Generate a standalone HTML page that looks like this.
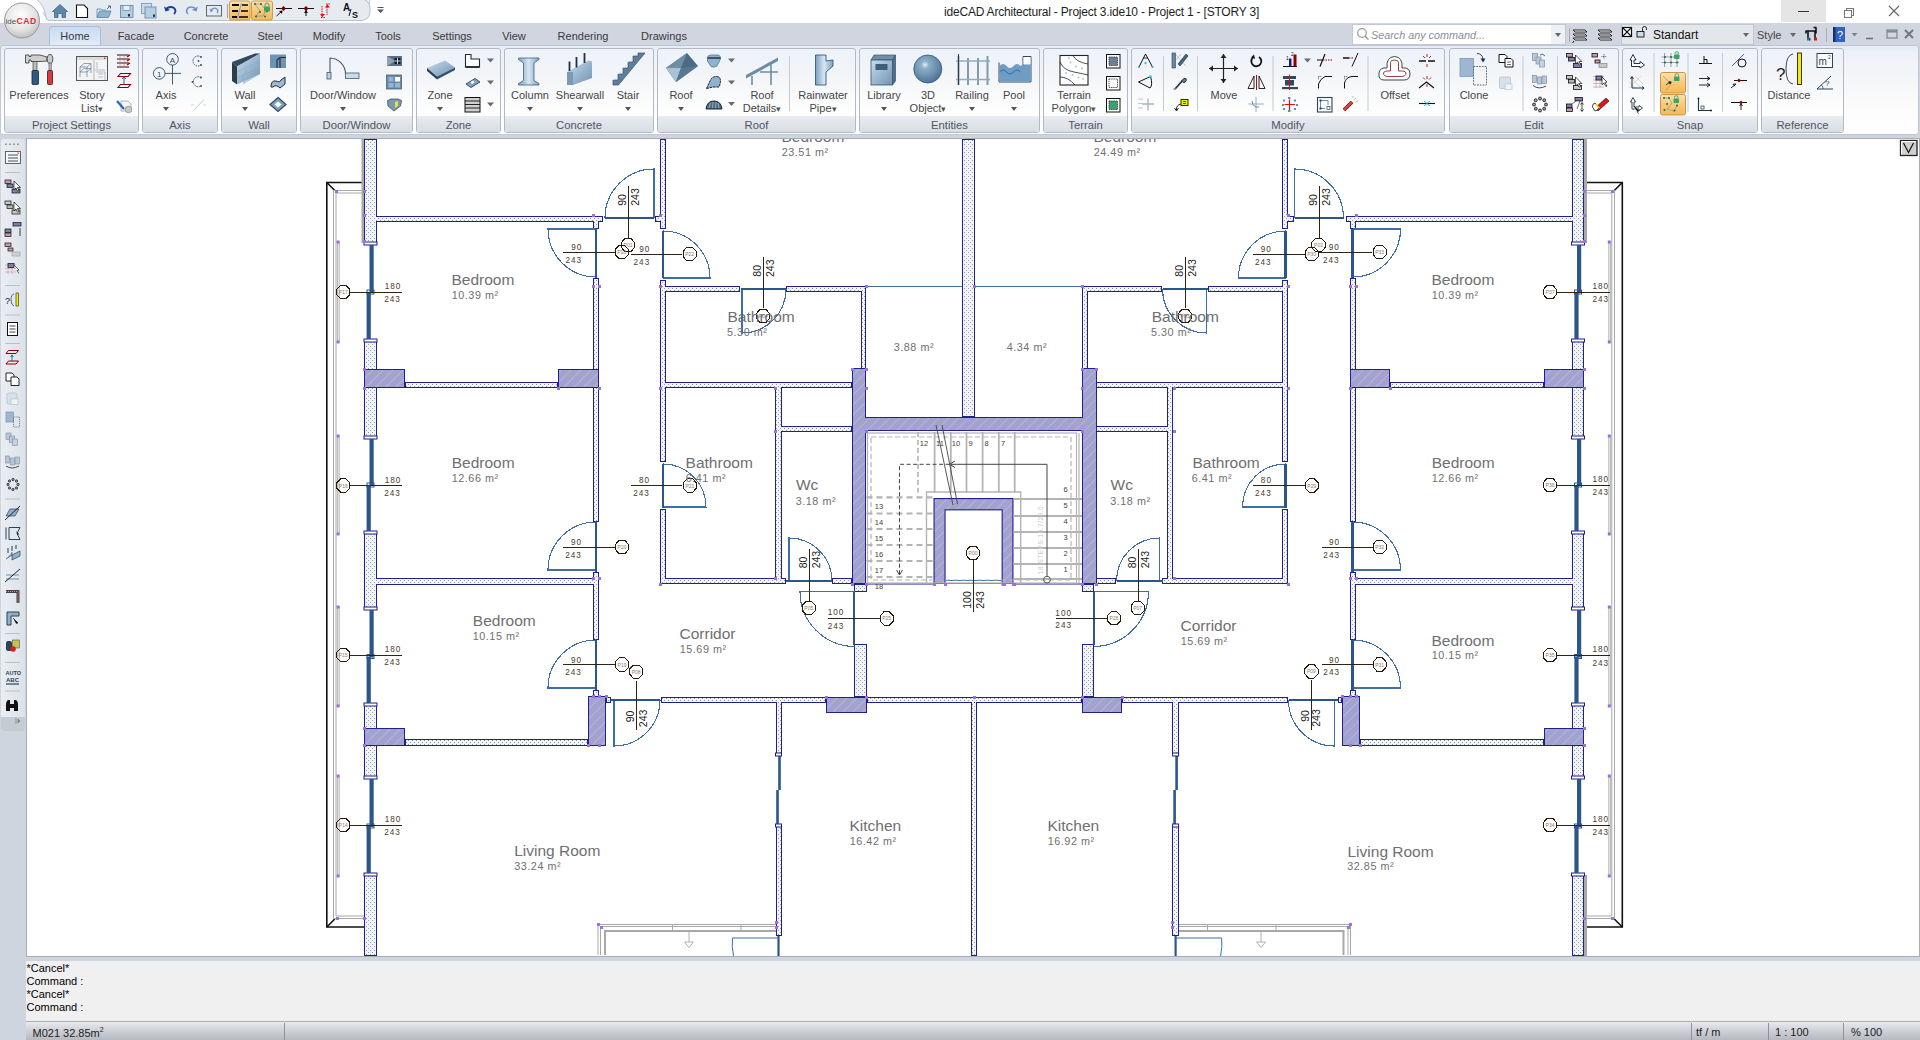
<!DOCTYPE html>
<html><head><meta charset="utf-8"><style>
*{margin:0;padding:0;box-sizing:border-box}
html,body{width:1920px;height:1040px;overflow:hidden;background:#cfd5de;font-family:"Liberation Sans",sans-serif;position:relative}
.a{position:absolute}
.t{position:absolute;white-space:nowrap;font-size:11px;color:#464646;line-height:14px}
.c{transform:translateX(-50%)}
.panel{position:absolute;top:48px;height:85px;border:1px solid #b3b9c3;border-radius:3px;background:linear-gradient(#eef3fb,#f2f4f7 30%,#f9fafb 55%,#ffffff 80%)}
.panel .lb{position:absolute;left:0;right:0;bottom:0;height:16px;background:linear-gradient(#e9ecf1,#d8dde5);text-align:center;font-size:11.3px;color:#50555e;line-height:18px;border-radius:0 0 3px 3px}
.sep{position:absolute;width:1px;background:#c9ced6}
</style></head><body>
<div class="a" style="left:0;top:0;width:1920px;height:23px;background:#fff"></div>
<div class="a" style="left:40px;top:-2px;width:330px;height:23px;background:linear-gradient(#eef2f6,#e4e9ef);border:1px solid #c6cdd7;border-radius:0 0 12px 16px"></div>
<div class="a" style="left:22px;top:-2px;width:26px;height:23px;background:#fff;border-radius:0 0 24px 0"></div>
<div class="t" style="left:944px;top:4.5px;font-size:12px;letter-spacing:-0.2px;color:#1e1e1e">ideCAD Architectural - Project 3.ide10 - Project 1 - [STORY 3]</div>
<div class="a" style="left:1781px;top:0;width:45px;height:22px;background:#e5e5e5"></div>
<div class="a" style="left:1798px;top:11px;width:11px;height:1px;background:#333"></div>
<div class="a" style="left:1846px;top:8px;width:8px;height:8px;border:1px solid #777"></div><div class="a" style="left:1844px;top:10px;width:8px;height:8px;border:1px solid #777;background:#fff"></div>
<svg class="a" style="left:1888px;top:5px" width="12" height="12"><path d="M1,1 L11,11 M11,1 L1,11" stroke="#666" stroke-width="1.1"/></svg>
<div class="a" style="left:0;top:24px;width:1920px;height:22px;background:#d0d5df"></div>
<div class="a" style="left:49px;top:26px;width:52px;height:22px;background:linear-gradient(#c9dbf1,#e6eef9);border:1px solid #a9c0dc;border-bottom:none;border-radius:4px 4px 0 0"></div>
<div class="t c" style="left:75px;top:29px;color:#3a3a3a">Home</div>
<div class="t c" style="left:136px;top:29px;color:#3a3a3a">Facade</div>
<div class="t c" style="left:206px;top:29px;color:#3a3a3a">Concrete</div>
<div class="t c" style="left:270px;top:29px;color:#3a3a3a">Steel</div>
<div class="t c" style="left:329px;top:29px;color:#3a3a3a">Modify</div>
<div class="t c" style="left:388px;top:29px;color:#3a3a3a">Tools</div>
<div class="t c" style="left:452px;top:29px;color:#3a3a3a">Settings</div>
<div class="t c" style="left:514px;top:29px;color:#3a3a3a">View</div>
<div class="t c" style="left:583px;top:29px;color:#3a3a3a">Rendering</div>
<div class="t c" style="left:664px;top:29px;color:#3a3a3a">Drawings</div>
<div class="a" style="left:1352px;top:24px;width:214px;height:21px;background:#fff;border:1px solid #c3c9d2"></div>
<div class="a" style="left:1551px;top:25px;width:14px;height:19px;background:#eef0f3"></div>
<div class="t" style="left:1371px;top:28px;font-style:italic;color:#8b8f96;font-size:10.8px">Search any command...</div>
<svg class="a" style="left:1356px;top:27px" width="14" height="14"><circle cx="6" cy="6" r="4.3" fill="none" stroke="#999" stroke-width="1.2"/><path d="M9,9 L12.5,12.5" stroke="#999" stroke-width="1.4"/></svg>
<div class="a" style="left:1555px;top:33px;width:0;height:0;border-left:3.5px solid transparent;border-right:3.5px solid transparent;border-top:4px solid #666"></div>
<div class="a" style="left:1621px;top:24px;width:133px;height:21px;background:#e3e7ec;border:1px solid #bfc6cf"></div>
<div class="t" style="left:1653px;top:28px;color:#111;font-size:12px">Standart</div>
<div class="a" style="left:1743px;top:33px;width:0;height:0;border-left:3.5px solid transparent;border-right:3.5px solid transparent;border-top:4px solid #666"></div>
<div class="t" style="left:1757px;top:28px;color:#444">Style</div>
<div class="a" style="left:1790px;top:33px;width:0;height:0;border-left:3.5px solid transparent;border-right:3.5px solid transparent;border-top:4px solid #666"></div>
<div class="a" style="left:0;top:45px;width:1919px;height:90px;background:linear-gradient(#e3ecf9,#eef2f8 8%,#f3f5f8 35%,#fbfbfc 65%,#fff);border:1px solid #c2c7cf;border-radius:3px"></div>
<div class="panel" style="left:4px;width:135px"><div class="lb">Project Settings</div></div>
<div class="panel" style="left:142px;width:76px"><div class="lb">Axis</div></div>
<div class="panel" style="left:221px;width:76px"><div class="lb">Wall</div></div>
<div class="panel" style="left:300px;width:113px"><div class="lb">Door/Window</div></div>
<div class="panel" style="left:416px;width:85px"><div class="lb">Zone</div></div>
<div class="panel" style="left:504px;width:150px"><div class="lb">Concrete</div></div>
<div class="panel" style="left:657px;width:199px"><div class="lb">Roof</div></div>
<div class="panel" style="left:859px;width:181px"><div class="lb">Entities</div></div>
<div class="panel" style="left:1043px;width:85px"><div class="lb">Terrain</div></div>
<div class="panel" style="left:1131px;width:314px"><div class="lb">Modify</div></div>
<div class="panel" style="left:1449px;width:170px"><div class="lb">Edit</div></div>
<div class="panel" style="left:1622px;width:136px"><div class="lb">Snap</div></div>
<div class="panel" style="left:1761px;width:83px"><div class="lb">Reference</div></div>
<div class="t c" style="left:39px;top:88.0px">Preferences</div>
<div class="t c" style="left:92px;top:88.0px">Story</div>
<div class="t c" style="left:92px;top:100.9px">List<span style='font-size:9px;color:#555'>▾</span></div>
<div class="t c" style="left:166px;top:88.0px">Axis</div>
<div class="a" style="left:162.5px;top:107px;width:0;height:0;border-left:3.5px solid transparent;border-right:3.5px solid transparent;border-top:4px solid #555"></div>
<div class="t c" style="left:245px;top:88.0px">Wall</div>
<div class="a" style="left:241.5px;top:107px;width:0;height:0;border-left:3.5px solid transparent;border-right:3.5px solid transparent;border-top:4px solid #555"></div>
<div class="t c" style="left:343px;top:88.0px">Door/Window</div>
<div class="a" style="left:339.5px;top:107px;width:0;height:0;border-left:3.5px solid transparent;border-right:3.5px solid transparent;border-top:4px solid #555"></div>
<div class="t c" style="left:440px;top:88.0px">Zone</div>
<div class="a" style="left:436.5px;top:107px;width:0;height:0;border-left:3.5px solid transparent;border-right:3.5px solid transparent;border-top:4px solid #555"></div>
<div class="t c" style="left:530px;top:88.0px">Column</div>
<div class="a" style="left:526.5px;top:107px;width:0;height:0;border-left:3.5px solid transparent;border-right:3.5px solid transparent;border-top:4px solid #555"></div>
<div class="t c" style="left:580px;top:88.0px">Shearwall</div>
<div class="a" style="left:576.5px;top:107px;width:0;height:0;border-left:3.5px solid transparent;border-right:3.5px solid transparent;border-top:4px solid #555"></div>
<div class="t c" style="left:628px;top:88.0px">Stair</div>
<div class="a" style="left:624.5px;top:107px;width:0;height:0;border-left:3.5px solid transparent;border-right:3.5px solid transparent;border-top:4px solid #555"></div>
<div class="t c" style="left:681px;top:88.0px">Roof</div>
<div class="a" style="left:677.5px;top:107px;width:0;height:0;border-left:3.5px solid transparent;border-right:3.5px solid transparent;border-top:4px solid #555"></div>
<div class="t c" style="left:762px;top:88.0px">Roof</div>
<div class="t c" style="left:762px;top:100.9px">Details<span style='font-size:9px;color:#555'>▾</span></div>
<div class="t c" style="left:823px;top:88.0px">Rainwater</div>
<div class="t c" style="left:823px;top:100.9px">Pipe<span style='font-size:9px;color:#555'>▾</span></div>
<div class="t c" style="left:884px;top:88.0px">Library</div>
<div class="a" style="left:880.5px;top:107px;width:0;height:0;border-left:3.5px solid transparent;border-right:3.5px solid transparent;border-top:4px solid #555"></div>
<div class="t c" style="left:928px;top:88.0px">3D</div>
<div class="t c" style="left:928px;top:100.9px">Object<span style='font-size:9px;color:#555'>▾</span></div>
<div class="t c" style="left:972px;top:88.0px">Railing</div>
<div class="a" style="left:968.5px;top:107px;width:0;height:0;border-left:3.5px solid transparent;border-right:3.5px solid transparent;border-top:4px solid #555"></div>
<div class="t c" style="left:1014px;top:88.0px">Pool</div>
<div class="a" style="left:1010.5px;top:107px;width:0;height:0;border-left:3.5px solid transparent;border-right:3.5px solid transparent;border-top:4px solid #555"></div>
<div class="t c" style="left:1074px;top:88.0px">Terrain</div>
<div class="t c" style="left:1074px;top:100.9px">Polygon<span style='font-size:9px;color:#555'>▾</span></div>
<div class="t c" style="left:1224px;top:88.0px">Move</div>
<div class="t c" style="left:1395px;top:88.0px">Offset</div>
<div class="t c" style="left:1474px;top:88.0px">Clone</div>
<div class="t c" style="left:1789px;top:88.0px">Distance</div>
<div class="a" style="left:26px;top:138px;width:1894px;height:819px;background:#fff;border:1px solid #a7aeb8"></div>
<svg class="a" style="left:1899px;top:139px" width="20" height="18"><rect x="1.5" y="1.5" width="16.5" height="15" fill="#d0d0d0" stroke="#222" stroke-width="1.3"/><path d="M2.5,15.5 V2.5 H17" stroke="#fff" stroke-width="1" fill="none"/><path d="M4.5,4 L9.5,13.5 L14.5,4" stroke="#111" stroke-width="1.2" fill="none"/></svg>
<div class="a" style="left:1px;top:139px;width:24px;height:592px;background:linear-gradient(90deg,#eaeef3,#dde2e9);border-radius:3px"></div>
<div class="a" style="left:1px;top:717px;width:24px;height:14px;background:#c5cbd3;border-radius:0 0 3px 3px"></div>
<div class="a" style="left:26px;top:961px;width:1894px;height:61px;background:#f0f0f0;border-bottom:1px solid #a9aeb5"></div>
<div class="t" style="left:26.5px;top:961.5px;color:#000;font-size:11px;line-height:13px">*Cancel*</div>
<div class="t" style="left:26.5px;top:974.5px;color:#000;font-size:11px;line-height:13px">Command :</div>
<div class="t" style="left:26.5px;top:987.5px;color:#000;font-size:11px;line-height:13px">*Cancel*</div>
<div class="t" style="left:26.5px;top:1000.5px;color:#000;font-size:11px;line-height:13px">Command :</div>
<div class="a" style="left:26px;top:1022px;width:1894px;height:18px;background:linear-gradient(#e8eaee,#cfd2d8 45%,#b5b9c0)"></div>
<div class="t" style="left:32.5px;top:1023px;color:#222;font-size:11px">M021 32.85m<sup style="font-size:7px;vertical-align:5px">2</sup></div>
<div class="a" style="left:283.5px;top:1023px;width:1px;height:17px;background:#8d9299"></div>
<div class="a" style="left:1691px;top:1023px;width:1px;height:17px;background:#8d9299"></div>
<div class="a" style="left:1767.5px;top:1023px;width:1px;height:17px;background:#8d9299"></div>
<div class="a" style="left:1843px;top:1023px;width:1px;height:17px;background:#8d9299"></div>
<div class="t" style="left:1696px;top:1025px;color:#222;font-size:11px">tf / m</div>
<div class="t" style="left:1775px;top:1025px;color:#222;font-size:11px">1 : 100</div>
<div class="t" style="left:1851px;top:1025px;color:#222;font-size:11px">% 100</div>
<svg class="a" style="left:0;top:0" width="1920" height="140" viewBox="0 0 1920 140"><defs><radialGradient id="lg" cx="0.45" cy="0.35" r="0.7"><stop offset="0" stop-color="#ffffff"/><stop offset="0.6" stop-color="#e4e4e4"/><stop offset="1" stop-color="#b8b8b8"/></radialGradient><linearGradient id="og" x1="0" y1="0" x2="0" y2="1"><stop offset="0" stop-color="#fde3b0"/><stop offset="0.5" stop-color="#f9c97a"/><stop offset="1" stop-color="#f6b955"/></linearGradient><linearGradient id="bl" x1="0" y1="0" x2="1" y2="1"><stop offset="0" stop-color="#c9dced"/><stop offset="1" stop-color="#6f93b3"/></linearGradient><linearGradient id="bl2" x1="0" y1="0" x2="1" y2="0"><stop offset="0" stop-color="#7d9fbd"/><stop offset="0.5" stop-color="#d7e6f2"/><stop offset="1" stop-color="#7d9fbd"/></linearGradient></defs><path d="M36,-1 H360 Q370,-1 370,9 V11 Q370,20.5 360,20.5 H49 Q46,20.5 46,17 Q44,4 36,-1 Z" fill="#e6ebf1" stroke="#b9c1cc" stroke-width="1"/><circle cx="22" cy="20.5" r="17.5" fill="url(#lg)" stroke="#9a9a9a" stroke-width="1"/><text x="5.5" y="24" font-size="8" fill="#555" font-family="Liberation Sans">ide</text><path d="M4,15 V26" stroke="#fff" stroke-width="0"/><text x="16.5" y="24" font-size="8.6" font-weight="bold" fill="#e8262a" font-family="Liberation Sans" letter-spacing="0.6">CAD</text><path d="M52.5,11.5 L60,4.5 L67.5,11.5 H65.5 V17.5 H62 V13.5 H58 V17.5 H54.5 V11.5 Z" fill="#5d87a9" stroke="#3f6685" stroke-width="0.8"/><path d="M76.5,5 H84 L87.5,8.5 V17.5 H76.5 Z" fill="#fff" stroke="#111" stroke-width="1.1"/><path d="M97,17.5 L99.5,11 H111 L108.5,17.5 Z" fill="#8eb2cf" stroke="#5b84a6" stroke-width="0.8"/><path d="M97,17.5 V9 H101 L102,10 H106" fill="none" stroke="#5b84a6" stroke-width="0.8"/><path d="M107,9 L110,6 M108,6 h2.5 v2.5" stroke="#3e6b93" stroke-width="1" fill="none"/><rect x="120.5" y="5.5" width="12.5" height="12" fill="#b7cde0" stroke="#6e95b5" stroke-width="1"/><rect x="123" y="5.5" width="7" height="5" fill="#e8eff6" stroke="#6e95b5" stroke-width="0.8"/><rect x="128" y="14" width="2" height="2.5" fill="#333"/><rect x="141.5" y="3.5" width="10" height="10" fill="#c8d9e8" stroke="#7aa0bf" stroke-width="0.9"/><rect x="145" y="7" width="11" height="11" fill="#b7cde0" stroke="#6e95b5" stroke-width="1"/><rect x="153" y="14.5" width="2" height="2.3" fill="#333"/><path d="M166,9 Q170,5.5 174,8 Q177,11 174,14" fill="none" stroke="#1c3f94" stroke-width="1.8"/><path d="M164,6.5 L165.5,11.5 L170,10" fill="#1c3f94"/><path d="M196,9 Q192,5.5 188,8 Q185,11 188,14" fill="none" stroke="#6f8fd0" stroke-width="1.6"/><path d="M198,6.5 L196.5,11.5 L192,10" fill="#6f8fd0"/><rect x="206.5" y="5.5" width="15" height="10.5" fill="none" stroke="#666" stroke-width="1"/><path d="M211,10 Q214,7 217,9 Q219,11 217,13" fill="none" stroke="#6f8fd0" stroke-width="1.2"/><path d="M209.5,8.5 L210.5,12 L213.5,11" fill="#6f8fd0"/><path d="M227.5,4 V18" stroke="#9aa3ae" stroke-width="1"/><rect x="229.5" y="1" width="20.5" height="19" rx="2" fill="url(#og)" stroke="#d59a42" stroke-width="1"/><path d="M232,5 h7 M232,11 h6 M232,17 h5" stroke="#000" stroke-width="2.2"/><path d="M242,5 h6 M241,11 h7 M239,17 h9" stroke="#000" stroke-width="1.3"/><path d="M241.5,3 L237,19" stroke="#6fa0c9" stroke-width="1"/><rect x="251.5" y="1" width="21" height="19" rx="2" fill="url(#og)" stroke="#d59a42" stroke-width="1"/><path d="M255,4 L261,4 L266,10 L263,16 L256,16 L260,11 Z" fill="none" stroke="#6f8fa0" stroke-width="0.7"/><g fill="#1b6b43"><circle cx="255" cy="4" r="1"/><circle cx="261" cy="4" r="1"/><circle cx="260" cy="12" r="1"/><circle cx="256" cy="16.5" r="1"/><circle cx="265" cy="16.5" r="1"/><circle cx="267" cy="11.5" r="1"/></g><rect x="264" y="6.5" width="6" height="5" rx="1" fill="#3aa36a"/><path d="M265,6.5 V5 a2,2 0 0 1 4,0 V6.5" fill="none" stroke="#3aa36a" stroke-width="1"/><path d="M276,8.5 H292" stroke="#111" stroke-width="1"/><path d="M283.5,6 l2.5,2.5 l-2.5,2.5 l-2.5,-2.5 z" fill="#7a0000"/><path d="M276.5,16 L282,11" stroke="#111" stroke-width="1"/><path d="M282.5,10.5 l-3.5,0.5 l3,3 z" fill="#111"/><path d="M298,8.5 H314" stroke="#111" stroke-width="1"/><path d="M306,6 l2.5,2.5 l-2.5,2.5 l-2.5,-2.5 z" fill="#7a0000"/><path d="M306,10 V16" stroke="#111" stroke-width="1"/><path d="M304,13 l2,-3 l2,3" fill="#111"/><path d="M322,6 V17 M327,4.5 V15 M321,17.5 h4.5 M326,4 h4.5" stroke="#e01010" stroke-width="1" stroke-dasharray="1.5,0.8"/><path d="M320,14 l2.5,3 l2.5,-3 z M325,7.5 l2.5,-3 l2.5,3 z" fill="#e01010"/><text x="343" y="11" font-size="10" font-weight="bold" fill="#111" font-family="Liberation Sans">A</text><path d="M351,9 L349,16" stroke="#111" stroke-width="1"/><text x="352" y="18" font-size="9" font-weight="bold" fill="#111" font-family="Liberation Sans">S</text><path d="M377.5,7.5 h6" stroke="#555" stroke-width="1"/><path d="M377,9.5 h7 l-3.5,3.5 z" fill="#555"/><path d="M25.5,55 H29 V56.5 H31 V55 H40 L47,57 V61 L40,61.5 H31 V60 H29 V63 H25.5 Z" fill="#cfcfcf" stroke="#333" stroke-width="0.8"/><rect x="33" y="61.5" width="4" height="9" fill="#bbb" stroke="#333" stroke-width="0.6"/><rect x="32" y="70.5" width="6.5" height="14" rx="1" fill="#2e5a88" stroke="#222" stroke-width="0.8"/><ellipse cx="50" cy="59" rx="2.8" ry="4.5" fill="#ccc" stroke="#333" stroke-width="0.8"/><rect x="49" y="63" width="2.2" height="7.5" fill="#bbb" stroke="#333" stroke-width="0.5"/><rect x="47.5" y="70.5" width="5" height="14" rx="1" fill="#e3353f" stroke="#222" stroke-width="0.8"/><rect x="76.5" y="56.5" width="31" height="24" fill="#f4f4f4" stroke="#555" stroke-width="1"/><rect x="77" y="57" width="30" height="3" fill="#dcdcdc"/><rect x="104" y="57.5" width="1.5" height="1.5" fill="#e33"/><path d="M94,60 V80" stroke="#999" stroke-width="0.7"/><path d="M80,67 L84,63.5 H91 L87,67 Z M80,72 L84,68.5 H91 L87,72 Z M80,67 V77 M87,67 V77 M91,63.5 V73" fill="none" stroke="#5f7f9f" stroke-width="0.7"/><path d="M95,70 H105 M97,62 V69 M96,72 h9 v8 M98,74 h5 M98,77 h5" fill="none" stroke="#8a9aa8" stroke-width="0.6"/><g stroke="#111" stroke-width="1"><path d="M117,55 h12 M117,59 h12 M117,63 h12 M117,67 h12"/></g><path d="M120,54 V68 M124,54 V68" stroke="#e66" stroke-width="0.6"/><path d="M127,57 l3,-2 M127,61 l3,-2 M127,65 l3,-2" stroke="#b00" stroke-width="1.4"/><path d="M118,76.5 l2.5,-3 h10 l-2.5,3 z M118,87.5 l2.5,-3 h10 l-2.5,3 z" fill="none" stroke="#8b0000" stroke-width="1.1"/><path d="M124,85 V77" stroke="#2d5b84" stroke-width="1"/><path d="M122,79 l2,-2.5 l2,2.5" fill="none" stroke="#2d5b84" stroke-width="1"/><path d="M121,101 h7 l3,3 v7 h-10 z" fill="#f2f4f6" stroke="#8a9aa8" stroke-width="0.7"/><path d="M117,101 l7,8" stroke="#2d6aa8" stroke-width="2.2"/><circle cx="128.5" cy="109.5" r="3.3" fill="#c8c8c8" stroke="#888" stroke-width="0.7"/><g fill="none" stroke="#2f4a5e" stroke-width="0.9"><circle cx="172.5" cy="59.3" r="5.8"/><circle cx="159.2" cy="73.4" r="5.8"/><path d="M172.5,65 V84.5 M165,73.4 H181"/></g><text x="172.5" y="62.5" font-size="8" text-anchor="middle" fill="#2f4a5e" font-family="Liberation Sans">A</text><text x="159.2" y="76.5" font-size="8" text-anchor="middle" fill="#2f4a5e" font-family="Liberation Sans">1</text><path d="M201,57 A5,5 0 1 0 201,65" fill="none" stroke="#2f4a5e" stroke-width="0.9" stroke-dasharray="1.5,0.8"/><circle cx="201" cy="57" r="0.9" fill="#2f4a5e"/><circle cx="201" cy="65" r="0.9" fill="#2f4a5e"/><circle cx="198.5" cy="61" r="0.9" fill="#2f4a5e"/><path d="M201,77.5 A5,5 0 1 0 201,86" fill="none" stroke="#2f4a5e" stroke-width="0.9" stroke-dasharray="1.5,0.8"/><circle cx="201" cy="77.5" r="0.9" fill="#2f4a5e"/><circle cx="201" cy="86" r="0.9" fill="#2f4a5e"/><circle cx="192.5" cy="82" r="0.9" fill="#2f4a5e"/><path d="M194,110 L204,99.5" stroke="#b9c3cc" stroke-width="0.9"/><path d="M191,105 h3 M203,105 h3" stroke="#cfd6dc" stroke-width="0.9"/><path d="M232,62 L255,53.5 H260 V74 L243,84.5 V66.5 Z" fill="#b9cfdf"/><path d="M232,62 L237,66.5 V84.5 L232,81 Z" fill="#2b3c4c"/><path d="M232,62 L255,53.5 L260,53.5 L237,66.5 Z" fill="#364a5d"/><path d="M237,66.5 L260,53.5 V74 L237,84.5 Z" fill="url(#bl)"/><path d="M237,72 L260,61 M237,78 L260,67 M246,69 V75 M252,72 V78 M243,75 V81" stroke="#8fa9bf" stroke-width="0.6"/><rect x="270" y="54.5" width="16" height="13.5" fill="#6f93b3"/><path d="M277,68 V60 L280,57.5 H286 M280,57.5 V68" fill="none" stroke="#1f2f3d" stroke-width="1.1"/><path d="M271,87 Q271,80 276,81 Q280,83 281,80 L285,77 V84 L280,88 Q276,84 273,87 Z" fill="#9fbad0" stroke="#1f2f3d" stroke-width="1"/><path d="M278,97.5 L286,104.5 L278,111.5 L270,104.5 Z" fill="#7ea0bd" stroke="#2c4a63" stroke-width="1.2"/><path d="M278,101.5 L281.5,104.5 L278,107.5 L274.5,104.5 Z" fill="#fff"/><rect x="327" y="72.5" width="4" height="6.5" fill="#bcd0e2" stroke="#405a70" stroke-width="0.8"/><path d="M330,72 V58 A16,16 0 0 1 345.5,74" fill="none" stroke="#405a70" stroke-width="1.1"/><rect x="345.5" y="73" width="13.5" height="5.5" fill="#c9dbeb" stroke="#405a70" stroke-width="0.8"/><rect x="387" y="56" width="15" height="10" fill="#5b7086"/><path d="M387,56 L395,61 L387,66" fill="#8ea3b7"/><rect x="394.5" y="58" width="6" height="6" fill="#0f1f2f"/><path d="M397.5,58 V64 M394.5,61 H400.5" stroke="#fff" stroke-width="0.8"/><rect x="386.5" y="75" width="15" height="14" fill="#6b8aa6" stroke="#4c6278" stroke-width="0.8"/><rect x="388.5" y="77" width="5" height="4.5" fill="#8fb6d9"/><rect x="395" y="77" width="5" height="4.5" fill="#fff"/><rect x="388.5" y="83" width="5" height="4.5" fill="#8fb6d9"/><rect x="395" y="83" width="5" height="4.5" fill="#8fb6d9"/><path d="M387.5,100.5 L391,99 H398 L401.5,100.5 L400.5,106 L394,111 L388,106 Z" fill="#7e98ae" stroke="#3e5366" stroke-width="0.8"/><path d="M395,102 l3,-1 v5 l-3,2 z" fill="#e5e04b"/><path d="M427,68 L445,60.5 L455,67.5 L437,76.5 Z" fill="url(#bl)"/><path d="M427,68 L437,76.5 V79.5 L427,71 Z" fill="#2a4255"/><path d="M437,76.5 L455,67.5 V70 L437,79.5 Z" fill="#34536b"/><path d="M465.5,54.5 H471 V59 H479.5 V67 H465.5 Z" fill="#fff" stroke="#1c2b38" stroke-width="1.1"/><path d="M465.5,67 H479.5" stroke="#1c2b38" stroke-width="1.8"/><path d="M466,84 L475,78.5 L480,82 L471,87.5 Z" fill="#7fa3c2" stroke="#2b4357" stroke-width="0.9"/><rect x="471" y="81" width="3" height="2.5" fill="#fff" transform="rotate(-30 472.5 82.2)"/><rect x="465" y="97.5" width="15" height="14.5" fill="#cfcfcf" stroke="#111" stroke-width="1"/><path d="M465,101 h15 M465,104.5 h15 M465,108 h15" stroke="#111" stroke-width="0.9"/><path d="M487.0,58.5 h7 l-3.5,4 z" fill="#6b6b6b"/><path d="M487.0,80.5 h7 l-3.5,4 z" fill="#6b6b6b"/><path d="M487.0,102.5 h7 l-3.5,4 z" fill="#6b6b6b"/><path d="M518.5,58 H539 V59.5 L534,63 V80.5 L539,83.5 V85 H518.5 V83.5 L523.5,80.5 V63 L518.5,59.5 Z" fill="url(#bl2)" stroke="#4f6f8a" stroke-width="0.9"/><path d="M567,72 L588.5,60.5 L592,61.5 V78 L573,85 H567 Z" fill="url(#bl)"/><path d="M567,72 H573 V85 H567 Z" fill="#7a9ab5"/><path d="M569.5,71 V61.5 M576.5,67.5 V57 M584.5,63 V53" stroke="#1c3347" stroke-width="1.8"/><path d="M613,85 V80 H618 V74 H623 V68 H628 V62 H633 V56 H638 V53 H645 L618.5,85 Z" fill="#5d7d98" stroke="#3b5569" stroke-width="0.7"/><path d="M613,80 L618,77 M618,74 L623,71 M623,68 L628,65 M628,62 L633,59" stroke="#cfe0ee" stroke-width="0.6"/><path d="M666,68 L687,53 L698,66 L676,82 Z" fill="#4b6a83"/><path d="M666,68 L681,68 L687,53 Z" fill="#6f8ea6"/><path d="M666,68 L681,68 L676,82 Z" fill="#a8c2d6"/><path d="M681,68 L698,66 L676,82 Z" fill="#587891"/><path d="M707.5,57 Q708,55 711,55 H718.5 Q721,56 720.5,59 L717,66 Q714,68 711,66.5 L707.5,61 Z" fill="#8fb2cf" stroke="#4c6a82" stroke-width="0.7"/><path d="M707.5,58 H720.5" stroke="#3e5668" stroke-width="2"/><path d="M706.5,88.5 L711,79 Q714,75.5 719,77 Q722,80 719,87 H713 Z" fill="#8fb2cf" stroke="#0e1e2c" stroke-width="1" stroke-dasharray="2.5,0.8"/><path d="M706,109 Q707,101 714,101 Q721,101 722,109 Z" fill="#4c6a82" stroke="#1a2a38" stroke-width="1"/><path d="M709,108 L710.5,103 M712.5,108 L713,102 M715.5,108 L716,102 M719,108 L718,103" stroke="#c7d7e4" stroke-width="0.6"/><path d="M728.0,58.5 h7 l-3.5,4 z" fill="#6b6b6b"/><path d="M728.0,80.5 h7 l-3.5,4 z" fill="#6b6b6b"/><path d="M728.0,102 h7 l-3.5,4 z" fill="#6b6b6b"/><path d="M746,75 L778,57.5 V61 L746,78.5 Z" fill="#6d8ca6"/><path d="M752,76 V85 M771,64.5 V85 M760,72 H778" stroke="#6d8ca6" stroke-width="1.6"/><path d="M789.5,56 V111" stroke="#c5cad1" stroke-width="1"/><path d="M815.5,55 H826 V61 L833,60 V66 L826,72 V85 H815.5 Z" fill="url(#bl2)" stroke="#2f5b85" stroke-width="0.9"/><path d="M871,60 L874,55 H895.5 L892.5,60 Z" fill="#6f8fa8" stroke="#3a5366" stroke-width="0.7"/><path d="M892.5,60 L895.5,55 V81 L892.5,85 Z" fill="#4f6f88" stroke="#3a5366" stroke-width="0.7"/><rect x="871" y="60" width="21.5" height="25" fill="url(#bl)" stroke="#3a5366" stroke-width="0.8"/><rect x="875.5" y="64" width="12" height="6" fill="#3d5d78"/><defs><radialGradient id="sp" cx="0.4" cy="0.35" r="0.65"><stop offset="0" stop-color="#e6f2fb"/><stop offset="0.2" stop-color="#8fb0c9"/><stop offset="1" stop-color="#4f7596"/></radialGradient></defs><circle cx="927.8" cy="69" r="14" fill="url(#sp)" stroke="#34567a" stroke-width="0.8"/><path d="M958.5,56 V85 M987.5,56 V85 M968,58 V85 M978,58 V85" stroke="#7f9bb1" stroke-width="2"/><path d="M956,61 H990 M956,79.5 H990" stroke="#8eabc0" stroke-width="1.6"/><path d="M958.5,54 V85" stroke="#24384a" stroke-width="1"/><path d="M999,62.5 V82 H1031 V56.5 H1023 V65" fill="none" stroke="#2f4a61" stroke-width="1"/><path d="M999.5,66 Q1003,62 1006.5,66 T1013.5,66 T1020.5,66 L1023,64.5 H1030.5 V81.5 H999.5 Z" fill="#6f9cc3"/><path d="M999.5,72 Q1003,68 1006.5,72 T1013.5,72 T1020.5,72" fill="none" stroke="#2b6ea8" stroke-width="1"/><rect x="1023.5" y="57" width="7" height="7" fill="#fff"/><rect x="1060" y="55.5" width="28" height="29.5" fill="#fff" stroke="#222" stroke-width="1.1"/><path d="M1073,55.5 Q1076,62 1088,64 M1060,62 Q1063,70 1074,72 Q1084,74 1088,75 M1060,77 Q1068,77 1075,85" fill="none" stroke="#222" stroke-width="0.8"/><g fill="#a9c4dc"><circle cx="1069" cy="58" r="1"/><circle cx="1070.5" cy="62.5" r="1"/><circle cx="1076" cy="66.5" r="1"/><circle cx="1082" cy="68.5" r="1"/><circle cx="1066" cy="73" r="1"/><circle cx="1072.5" cy="75" r="1"/><circle cx="1078.5" cy="77.5" r="1"/><circle cx="1083" cy="79" r="1"/></g><rect x="1106.5" y="54.5" width="13.5" height="13.5" fill="#fff" stroke="#111" stroke-width="1"/><rect x="1109" y="57.0" width="8.5" height="8.5" fill="#6a8098" stroke="#333" stroke-width="0.8" stroke-dasharray="1.5,0.7"/><rect x="1106.5" y="76.5" width="13.5" height="13.5" fill="#fff" stroke="#111" stroke-width="1"/><rect x="1109" y="79.0" width="8.5" height="8.5" fill="#fff" stroke="#333" stroke-width="0.8" stroke-dasharray="1.5,0.7"/><rect x="1106.5" y="98.5" width="13.5" height="13.5" fill="#fff" stroke="#111" stroke-width="1"/><rect x="1109" y="101.0" width="8.5" height="8.5" fill="#3aa36a" stroke="#333" stroke-width="0.8" stroke-dasharray="1.5,0.7"/><path d="M1139,67 L1145.5,54 L1152.5,67" fill="none" stroke="#111" stroke-width="1"/><path d="M1143,58 h5" stroke="#111" stroke-width="0.8"/><circle cx="1145.5" cy="63" r="1.2" fill="#19d3f0"/><circle cx="1139" cy="67" r="1" fill="#19b0d0"/><circle cx="1152.5" cy="67" r="1" fill="#19b0d0"/><path d="M1150.5,76.5 L1138.5,82 L1150,88 Q1153,85 1150.5,76.5 Z" fill="none" stroke="#111" stroke-width="1"/><circle cx="1150.5" cy="76.5" r="1.3" fill="#19d3f0"/><path d="M1138,99 h5 M1138,103.5 h4 M1138,108 h5" stroke="#b7c1ca" stroke-width="0.9"/><path d="M1142,104 H1154 M1148,98.5 V110.5" stroke="#a8b4be" stroke-width="1.3"/><path d="M1163.5,56 V111 M1197.5,56 V111 M1273,56 V111 M1368,56 V111 M1523,56 V111 M1557.5,56 V111 M1654,53 V112 M1688,53 V112 M1722.5,53 V112" stroke="#c5cad1" stroke-width="1"/><rect x="1172" y="53" width="3.5" height="15" fill="#6b86a0" stroke="#2b4357" stroke-width="0.6"/><path d="M1176,55 L1186,66 M1181,54 L1176,60" stroke="#999" stroke-width="0.5"/><path d="M1178,64 L1186,54 L1188,56 L1180,66 Z" fill="#46627c" stroke="#1a2a38" stroke-width="0.6"/><path d="M1175,89 L1183,80" stroke="#333" stroke-width="1.8"/><path d="M1181.5,81 Q1184,77 1186,78.5 Q1187.5,80.5 1184,83 Z" fill="#5f7f99" stroke="#222" stroke-width="0.8"/><rect x="1173.5" y="88" width="2" height="2" fill="#999"/><rect x="1181" y="99.5" width="7" height="6" fill="#f7f200" stroke="#111" stroke-width="0.9"/><path d="M1183,101.5 h3 M1183,103.5 h3" stroke="#111" stroke-width="0.7"/><path d="M1181,104 Q1176,105 1176.5,110" fill="none" stroke="#111" stroke-width="0.9"/><path d="M1174.5,108 l2,3 l2,-3" fill="none" stroke="#111" stroke-width="0.9"/><path d="M1209,68.5 H1238 M1223.5,54 V83" stroke="#222" stroke-width="1.2"/><path d="M1209,68.5 l4,-3 v6 z M1238,68.5 l-4,-3 v6 z M1223.5,54 l-3,4 h6 z M1223.5,83 l-3,-4 h6 z" fill="#222"/><path d="M1252.5,58 A5,5 0 1 0 1259,57" fill="none" stroke="#111" stroke-width="1.8"/><path d="M1254,54.5 l-3,3 l4,1.5 z" fill="#111"/><path d="M1248,88.5 L1254,76 V88.5 Z M1265,88.5 L1259,76 V88.5 Z" fill="none" stroke="#111" stroke-width="0.9"/><path d="M1256.5,75 V90" stroke="#a01010" stroke-width="1"/><path d="M1248.5,104 H1264 M1256,97 V112" stroke="#7fa0bb" stroke-width="0.8"/><path d="M1252,101 Q1253,108 1259,107" fill="none" stroke="#4f6f88" stroke-width="0.8"/><path d="M1283,66.5 H1297" stroke="#111" stroke-width="1"/><rect x="1289" y="58.5" width="2.5" height="8" fill="#1a1a8a"/><rect x="1293.5" y="54.5" width="3" height="12" fill="#8b0000"/><text x="1286" y="60" font-size="5" fill="#111" font-family="Liberation Sans">1</text><text x="1291" y="55.5" font-size="4.5" fill="#111" font-family="Liberation Sans">2</text><path d="M1304.0,58.5 h7 l-3.5,4 z" fill="#6b6b6b"/><rect x="1283" y="76" width="13" height="3" fill="#2d4a5f"/><rect x="1285" y="80" width="9" height="5.5" fill="#2d4a5f"/><rect x="1282" y="87" width="16" height="2.2" fill="#2d4a5f"/><path d="M1289.5,74.5 V90" stroke="#e01010" stroke-width="1"/><g fill="#6b8aa6"><rect x="1288" y="97" width="2.5" height="2"/><rect x="1283" y="99.5" width="2" height="2"/><rect x="1294" y="99.5" width="2" height="2"/><rect x="1282" y="104" width="2" height="2"/><rect x="1296" y="104" width="2" height="2"/><rect x="1283" y="108" width="2" height="2"/><rect x="1294" y="108" width="2" height="2"/><rect x="1288" y="110" width="2.5" height="2"/></g><path d="M1284.5,104.5 H1295 M1289.5,99.5 V110" stroke="#e01010" stroke-width="1.2"/><path d="M1317,60 h6 M1320,66.5 L1325,54" stroke="#111" stroke-width="1.2"/><path d="M1323,60 h9" stroke="#8b0000" stroke-width="1" stroke-dasharray="1.5,1"/><path d="M1343,58 h6" stroke="#111" stroke-width="1.5"/><path d="M1349,58 h5" stroke="#8b0000" stroke-width="1" stroke-dasharray="1.5,1"/><path d="M1352,66.5 L1358,53" stroke="#111" stroke-width="1"/><path d="M1318.5,88.5 V84 Q1320,79 1325,76.5 H1332" fill="none" stroke="#111" stroke-width="1"/><path d="M1318.5,76.5 h3 M1318.5,76.5 v3" stroke="#111" stroke-width="0.6" stroke-dasharray="1,0.7"/><path d="M1344.5,88.5 V83 Q1346,77 1352,76.5 H1358" fill="none" stroke="#111" stroke-width="1"/><path d="M1344.5,76.5 h3 M1344.5,76.5 v3" stroke="#111" stroke-width="0.6" stroke-dasharray="1,0.7"/><rect x="1317.5" y="97.5" width="14.5" height="14.5" fill="none" stroke="#2d4357" stroke-width="1.1"/><path d="M1320.5,100.5 V108.5 H1325 M1320.5,100.5 H1328 V105" fill="none" stroke="#4f6f88" stroke-width="0.8"/><rect x="1319.5" y="99.5" width="2" height="2" fill="#2d4357"/><rect x="1319.5" y="107.5" width="2" height="2" fill="#2d4357"/><rect x="1327" y="106.5" width="3" height="3" fill="#fff" stroke="#2d4357" stroke-width="0.7"/><path d="M1344,110 L1352,102" stroke="#222" stroke-width="3.8"/><path d="M1344,110 L1352,102" stroke="#e23b3b" stroke-width="2.6"/><path d="M1354,100 l2,-2 M1355,102 l3,-1 M1353,98 l0,-2" stroke="#999" stroke-width="0.6"/><path d="M1384,80 Q1378,80 1379,73 Q1380,67 1387,68 Q1386,57 1394.5,56.5 Q1403,57 1402,68 Q1410,67 1410,74 Q1410,80 1404,80 Z" fill="#fff" stroke="#444" stroke-width="1"/><path d="M1388,76.5 Q1383.5,76.5 1383.5,73 Q1384,70.5 1390.5,71 V62.5 Q1390.5,60 1394.5,60 Q1398.5,60 1398.5,62.5 V71 Q1405.5,70.5 1406,73 Q1406,76.5 1401,76.5 Z" fill="none" stroke="#8b2b2b" stroke-width="0.9"/><path d="M1419,61 h7 M1428,61 h7" stroke="#111" stroke-width="1.6"/><path d="M1427,54 v3 M1427,64 v3 M1423,56 l2,2 M1431,56 l-2,2" stroke="#8b0000" stroke-width="0.8"/><path d="M1419,88 L1426.5,82 L1434,88" fill="none" stroke="#111" stroke-width="1.2"/><path d="M1427,76 v3 M1427,84 v3 M1423,77.5 l2,2 M1431,77.5 l-2,2" stroke="#8b0000" stroke-width="0.8"/><path d="M1419,103.5 H1435" stroke="#111" stroke-width="1.1"/><path d="M1424,101 l6,5 M1430,101 l-6,5" stroke="#1ab0e0" stroke-width="0.9"/><rect x="1460" y="58.5" width="13.5" height="18" fill="#9db7d3" stroke="#6e8fad" stroke-width="0.7"/><rect x="1473.5" y="66.5" width="13" height="18.5" fill="none" stroke="#5f7282" stroke-width="1" stroke-dasharray="1.8,1"/><path d="M1477,53.5 Q1482,53.5 1483,59" fill="none" stroke="#1f3546" stroke-width="0.9"/><path d="M1480.5,58.5 l2.5,4 l2.5,-4 z" fill="#1f3546"/><path d="M1499,54.5 h6 l2,2 v6 h-8 z" fill="#fff" stroke="#111" stroke-width="1"/><path d="M1505,58.5 h6 l2,2 v6.5 h-8 z" fill="#fff" stroke="#111" stroke-width="1"/><path d="M1507,62 h4 M1507,64.5 h4" stroke="#111" stroke-width="0.6"/><rect x="1499.5" y="77" width="11" height="11.5" rx="1" fill="#d6e0e8" stroke="#b5c4d0" stroke-width="0.8"/><rect x="1505" y="84" width="7" height="5.5" fill="#f2f5f7" stroke="#b5c4d0" stroke-width="0.7"/><rect x="1532.5" y="53.5" width="5" height="7" fill="#b9c6d6" stroke="#7d8fa5" stroke-width="0.7"/><rect x="1536" y="57" width="5" height="7" fill="#b9c6d6" stroke="#7d8fa5" stroke-width="0.7"/><rect x="1539.5" y="60" width="5" height="7" fill="#c8d3df" stroke="#7d8fa5" stroke-width="0.7"/><path d="M1540,55 Q1543,53 1545,56" fill="none" stroke="#223" stroke-width="0.7"/><rect x="1532.5" y="75.5" width="4" height="7" fill="#b9c6d6" stroke="#7d8fa5" stroke-width="0.7"/><rect x="1537.5" y="77" width="4" height="7" fill="#b9c6d6" stroke="#7d8fa5" stroke-width="0.7"/><rect x="1542" y="76" width="4.5" height="7.5" fill="#b9c6d6" stroke="#7d8fa5" stroke-width="0.7"/><path d="M1533,85.5 Q1539,90 1546,86" fill="none" stroke="#223" stroke-width="0.8"/><g fill="#a898b0" stroke="#111" stroke-width="0.8"><circle cx="1546.0" cy="104.5" r="1.5"/><circle cx="1544.2" cy="108.7" r="1.5"/><circle cx="1540.0" cy="110.5" r="1.5"/><circle cx="1535.8" cy="108.7" r="1.5"/><circle cx="1534.0" cy="104.5" r="1.5"/><circle cx="1535.7" cy="100.3" r="1.5"/><circle cx="1540.0" cy="98.5" r="1.5"/><circle cx="1544.2" cy="100.2" r="1.5"/></g><rect x="1566.5" y="53.5" width="6" height="3.5" fill="#c99aa8" stroke="#111" stroke-width="0.8"/><rect x="1568.5" y="57.5" width="6" height="3.5" fill="#7b7fb0" stroke="#111" stroke-width="0.8"/><rect x="1573.5" y="63.5" width="8" height="4" fill="#7b7fb0" stroke="#111" stroke-width="0.8"/><path d="M1575.5,55.0 v9 l2,-2 l1.6,3.2 l1.4,-0.7 l-1.6,-3 h3 z" fill="#fff" stroke="#111" stroke-width="0.7"/><rect x="1592" y="53.5" width="5.5" height="3.5" fill="#c99aa8" stroke="#111" stroke-width="0.8"/><rect x="1595" y="60" width="5" height="3" fill="#c99aa8" stroke="#111" stroke-width="0.8"/><rect x="1599" y="63.5" width="8" height="4" fill="#c8c8c8" stroke="#888" stroke-width="0.7"/><path d="M1604,54 v5 M1601.5,56.5 h5" stroke="#1f3546" stroke-width="0.7" stroke-dasharray="1,0.6"/><rect x="1566.5" y="75.5" width="6" height="3.5" fill="#c8c8c8" stroke="#111" stroke-width="0.8"/><rect x="1568.5" y="79.5" width="6" height="3.5" fill="#b8b8b8" stroke="#111" stroke-width="0.8"/><rect x="1573.5" y="85.5" width="8" height="4" fill="#c8c8c8" stroke="#111" stroke-width="0.8"/><path d="M1575.5,77.0 v9 l2,-2 l1.6,3.2 l1.4,-0.7 l-1.6,-3 h3 z" fill="#fff" stroke="#111" stroke-width="0.7"/><path d="M1593,76.5 h11 M1593,80 h11 M1593,83.5 h11 M1593,87 h11 M1596,76 V88 M1600,76 V88" stroke="#c99aa8" stroke-width="0.7"/><rect x="1596" y="76" width="6" height="4" fill="#7b7fb0" stroke="#111" stroke-width="0.8"/><path d="M1602,77 l5,5 l-2,0.5 l2,3.5 l-1,0.6 l-2,-3.5 l-2,1.5 z" fill="#fff" stroke="#111" stroke-width="0.7"/><rect x="1575" y="97.5" width="7.5" height="3.5" fill="#7b7fb0" stroke="#111" stroke-width="0.8"/><rect x="1566.5" y="104" width="5.5" height="3.5" fill="#7b7fb0" stroke="#111" stroke-width="0.8"/><rect x="1566.5" y="108" width="6" height="3.5" fill="#c99aa8" stroke="#111" stroke-width="0.8"/><path d="M1582,103 V111 M1580.5,104.5 l1.5,-2 l1.5,2 M1580.5,109.5 l1.5,2 l1.5,-2" fill="none" stroke="#111" stroke-width="0.8"/><path d="M1572,104 l4,-3 h4 l-3,8" fill="#fff" stroke="#111" stroke-width="0.6"/><path d="M1595,108 L1606,98 L1609,101 L1598,111 Z" fill="#e01515" stroke="#111" stroke-width="0.6"/><path d="M1592.5,107 Q1592,104 1595,103 L1599,107 Q1598,111 1595,111 Z" fill="#fff" stroke="#111" stroke-width="0.8"/><path d="M1595.5,104 l4,4" stroke="#f0e000" stroke-width="1.2"/><path d="M1630,60 L1633,54.5 L1636,60 H1634 V63.5 H1640 V61.5 L1644.5,65 L1640,68 V66.5 H1631.5 V60 Z" fill="#fff" stroke="#1d3445" stroke-width="1"/><path d="M1629,76 l12,12 M1635,76 l8,8 M1629,82 l6,6 M1641,76 l-12,12" stroke="#d0d0d0" stroke-width="0.7"/><path d="M1632,77 V88 H1644 M1630.5,79 l1.5,-2.5 l1.5,2.5 M1642,86.5 l2,1.5 l-2,1.5" fill="none" stroke="#1d3445" stroke-width="1"/><path d="M1630.5,102 L1633,97.5 L1635.5,102 H1634 V107 H1639 V105.5 L1642.5,108 L1639,110.5 V109 H1632 V102 Z" fill="#fff" stroke="#1d3445" stroke-width="0.9"/><path d="M1634,106 l5,5 l-2,0.3 l1.5,2.5" fill="#111" stroke="#111" stroke-width="0.7"/><path d="M1664.5,53 V67 M1671,53 V67 M1677,53 V67 M1661.5,57 H1679 M1661.5,62.5 H1679" stroke="#666" stroke-width="0.6"/><g fill="#1b6b43"><circle cx="1665" cy="57" r="1"/><circle cx="1671" cy="57" r="1"/><circle cx="1665" cy="62.5" r="1"/><circle cx="1671" cy="62.5" r="1"/><circle cx="1677" cy="62.5" r="1"/></g><rect x="1674" y="54.5" width="5.5" height="4.5" rx="0.8" fill="#3aa36a"/><path d="M1675,54.5 V53.5 a1.8,1.8 0 0 1 3.6,0 V54.5" fill="none" stroke="#3aa36a" stroke-width="0.9"/><rect x="1660.5" y="72.5" width="25" height="20.5" rx="2" fill="url(#og)" stroke="#c8954a" stroke-width="1"/><rect x="1660.5" y="94.5" width="25" height="20.5" rx="2" fill="url(#og)" stroke="#c8954a" stroke-width="1"/><path d="M1663,76 L1671,84 L1666,90" stroke="#6f8fa0" stroke-width="0.6" fill="none"/><circle cx="1670" cy="82.5" r="1.5" fill="#1b3b2b"/><path d="M1666,85 l4,-3" stroke="#111" stroke-width="0.8"/><rect x="1674" y="76.5" width="5.5" height="4.5" rx="0.8" fill="#3aa36a"/><path d="M1675,76.5 V75.5 a1.8,1.8 0 0 1 3.6,0 V76.5" fill="none" stroke="#3aa36a" stroke-width="0.9"/><path d="M1664,98 L1669,98 L1672,103 L1667,109 L1674,111 L1677,106" stroke="#6f8fa0" stroke-width="0.6" fill="none"/><g fill="#1b6b43"><circle cx="1664" cy="98" r="1"/><circle cx="1669" cy="98" r="1"/><circle cx="1667" cy="104" r="1"/><circle cx="1664.5" cy="110" r="1"/><circle cx="1674.5" cy="110.5" r="1"/><circle cx="1677" cy="105.5" r="1"/></g><rect x="1673.5" y="98.5" width="5.5" height="4.5" rx="0.8" fill="#3aa36a"/><path d="M1674.5,98.5 V97.5 a1.8,1.8 0 0 1 3.6,0 V98.5" fill="none" stroke="#3aa36a" stroke-width="0.9"/><path d="M1699,63.5 H1712 M1704,56 V63 M1704,59.5 H1707 V63" fill="none" stroke="#111" stroke-width="1"/><path d="M1699,78.5 H1710 M1699,85 H1710 M1707,76.5 l3,2 l-3,2 M1707,83 l3,2 l-3,2" fill="none" stroke="#111" stroke-width="0.9"/><path d="M1698.5,98.5 V110.5 H1711" fill="none" stroke="#1d3445" stroke-width="1.1"/><rect x="1701" y="106" width="3" height="3" fill="none" stroke="#1d3445" stroke-width="0.7"/><circle cx="1698.5" cy="98.5" r="0.9" fill="#111"/><circle cx="1711" cy="110.5" r="0.9" fill="#111"/><path d="M1732,66 L1744,54" stroke="#1a3ad0" stroke-width="0.8"/><path d="M1737,61 L1740,58" stroke="#e01010" stroke-width="0.8"/><circle cx="1742" cy="63" r="4" fill="none" stroke="#111" stroke-width="1"/><path d="M1734,80.5 H1747" stroke="#111" stroke-width="1"/><path d="M1739,78.5 l2,2 l-2,2 l-2,-2 z" fill="#8b0000"/><path d="M1731,88 L1736,84 M1736,84 l-3,0.3 l2,2" stroke="#111" stroke-width="0.9" fill="none"/><path d="M1731,102.5 H1747" stroke="#111" stroke-width="1"/><path d="M1741,100.5 l2,2 l-2,2 l-2,-2 z" fill="#8b0000"/><path d="M1741,104 V110 M1739.5,106 l1.5,-2 l1.5,2" stroke="#111" stroke-width="0.9" fill="none"/><text x="1776" y="80" font-size="17" fill="#222" font-family="Liberation Sans">?</text><path d="M1793,54 Q1786,55 1786,69 Q1786,83 1793,84" fill="none" stroke="#333" stroke-width="0.9"/><rect x="1797.5" y="53" width="4" height="31.5" fill="#f5e90a" stroke="#222" stroke-width="0.9"/><rect x="1817" y="53.5" width="15.5" height="14" fill="#fff" stroke="#2d4357" stroke-width="1"/><text x="1818.5" y="65" font-size="10" fill="#2d4357" font-family="Liberation Sans">m</text><text x="1828" y="59" font-size="5" fill="#2d4357" font-family="Liberation Sans">2</text><path d="M1817,89 H1833 M1817,89 L1831,76" fill="none" stroke="#2d4357" stroke-width="1"/><path d="M1823,89 a5,5 0 0 0 -1.5,-4" fill="none" stroke="#2d4357" stroke-width="0.8"/><text x="1825" y="86" font-size="8" fill="#2d4357" font-family="Liberation Sans">?</text><path d="M1569.5,28 V42" stroke="#a3abb6" stroke-width="1"/><path d="M1573,30 h12 l2,2 h-12 z M1573,34 h12 l2,2 h-12 z M1573,38 h12 l2,2 h-12 z" fill="#fff" stroke="#111" stroke-width="0.9"/><path d="M1598,30 h12 l2,2 h-12 z M1598,34 h12 l2,2 h-12 z M1598,38 h12 l2,2 h-12 z" fill="#fff" stroke="#111" stroke-width="0.9"/><path d="M1574,41 l-1.5,2" stroke="#111" stroke-width="1"/><rect x="1622.5" y="27.5" width="9" height="9" fill="#fff" stroke="#111" stroke-width="1.2"/><path d="M1623,28 L1631,36 M1631,28 L1623,36" stroke="#111" stroke-width="1.1"/><rect x="1637" y="31.5" width="7" height="5.5" fill="#cde" stroke="#111" stroke-width="0.9"/><path d="M1642.5,31 V28.5 a2,2 0 0 1 4,0 V30" fill="none" stroke="#111" stroke-width="0.9"/><path d="M1805.5,31 h11 M1816,27.5 v6 M1808,31 v9 M1815,31 v9 M1806,31 v2.5 M1813.5,27.5 h3" stroke="#111" stroke-width="1.6" fill="none"/><rect x="1807" y="37.5" width="2.5" height="3" fill="#1a8a3a"/><rect x="1809" y="38" width="1.5" height="2.5" fill="#1a3ad0"/><rect x="1814" y="37.5" width="3" height="3" fill="#e01010"/><path d="M1826.5,28 V42" stroke="#a3abb6" stroke-width="1"/><rect x="1833" y="27" width="12" height="15" fill="#3062c0"/><rect x="1833" y="27" width="2.5" height="15" fill="#1a2f6a"/><text x="1837" y="39" font-size="11" fill="#fff" font-family="Liberation Sans">?</text><path d="M1851.5,33 h6 l-3,3.5 z" fill="#7a8290"/><path d="M1866,38.5 h7" stroke="#6d7480" stroke-width="1.6"/><rect x="1887" y="30" width="10" height="8" fill="none" stroke="#7d8592" stroke-width="1.2"/><path d="M1887,31.5 h10" stroke="#7d8592" stroke-width="2"/><path d="M1905,30 L1913,38 M1913,30 L1905,38" stroke="#6d7480" stroke-width="1.8"/></svg><svg class="a" style="left:0;top:0" width="30" height="740" viewBox="0 0 30 740"><g fill="#8e96a2"><rect x="5" y="143.5" width="1.8" height="1.5"/><rect x="9" y="143.5" width="1.8" height="1.5"/><rect x="13" y="143.5" width="1.8" height="1.5"/><rect x="17" y="143.5" width="1.8" height="1.5"/></g><path d="M5,172.5 H20" stroke="#b9c0c9" stroke-width="1"/><path d="M5,285.5 H20" stroke="#b9c0c9" stroke-width="1"/><path d="M5,315 H20" stroke="#b9c0c9" stroke-width="1"/><path d="M5,343.5 H20" stroke="#b9c0c9" stroke-width="1"/><path d="M5,499 H20" stroke="#b9c0c9" stroke-width="1"/><path d="M5,633.5 H20" stroke="#b9c0c9" stroke-width="1"/><path d="M5,662.5 H20" stroke="#b9c0c9" stroke-width="1"/><path d="M5,691 H20" stroke="#b9c0c9" stroke-width="1"/><rect x="5.5" y="151.5" width="15" height="12" fill="#f4f6f8" stroke="#555" stroke-width="0.9"/><path d="M8,155 h10 M8,158 h10 M8,161 h10" stroke="#2d4357" stroke-width="0.9"/><rect x="17.5" y="152.5" width="1.3" height="1.3" fill="#e33"/><rect x="5" y="180" width="6" height="3.5" fill="#c99aa8" stroke="#111" stroke-width="0.7"/><rect x="7" y="184" width="6" height="3.5" fill="#7b7fb0" stroke="#111" stroke-width="0.7"/><rect x="12" y="189" width="8" height="4" fill="#7b7fb0" stroke="#111" stroke-width="0.7"/><path d="M14,181 v9 l2,-2 l1.6,3.2 l1.4,-0.7 l-1.6,-3 h3 z" fill="#fff" stroke="#111" stroke-width="0.7"/><rect x="5" y="201" width="6" height="3.5" fill="#c8c8c8" stroke="#111" stroke-width="0.7"/><rect x="7" y="205" width="6" height="3.5" fill="#b8b8b8" stroke="#111" stroke-width="0.7"/><rect x="12" y="210" width="8" height="4" fill="#c8c8c8" stroke="#111" stroke-width="0.7"/><path d="M14,202 v9 l2,-2 l1.6,3.2 l1.4,-0.7 l-1.6,-3 h3 z" fill="#fff" stroke="#111" stroke-width="0.7"/><rect x="13" y="222.5" width="8" height="3.5" fill="#7b7fb0" stroke="#111" stroke-width="0.7"/><rect x="5" y="229" width="6" height="3.5" fill="#7b7fb0" stroke="#111" stroke-width="0.7"/><rect x="5" y="233" width="6" height="3.5" fill="#c99aa8" stroke="#111" stroke-width="0.7"/><path d="M20,228 V236" stroke="#111" stroke-width="0.8"/><rect x="5" y="243" width="6" height="3.5" fill="#c99aa8" stroke="#111" stroke-width="0.7"/><rect x="8" y="248" width="5" height="3" fill="#c99aa8" stroke="#111" stroke-width="0.7"/><rect x="12" y="252" width="8" height="4" fill="#d0d0d0" stroke="#999" stroke-width="0.6"/><path d="M5,265 h11 M5,268.5 h11 M5,272 h11 M8,264 V274 M12,264 V274" stroke="#c99aa8" stroke-width="0.6"/><rect x="8" y="263.5" width="6" height="4" fill="#7b7fb0" stroke="#111" stroke-width="0.7"/><path d="M14,265 l5,5 l-2,0.5 l2,3" fill="#fff" stroke="#111" stroke-width="0.6"/><text x="5" y="304" font-size="9" fill="#111" font-family="Liberation Sans">?</text><path d="M14,294 Q11,294.5 11,300 Q11,305 14,306" fill="none" stroke="#333" stroke-width="0.7"/><rect x="16" y="293" width="2.5" height="13" fill="#f5e90a" stroke="#222" stroke-width="0.6"/><rect x="7.5" y="322.5" width="10" height="13" fill="#fff" stroke="#111" stroke-width="1"/><path d="M9.5,326 h6 M9.5,329 h6 M9.5,332 h6" stroke="#111" stroke-width="0.8"/><path d="M6,353.5 l2.5,-3 h10 l-2.5,3 z M6,364 l2.5,-3 h10 l-2.5,3 z" fill="none" stroke="#8b0000" stroke-width="1"/><path d="M12,362 V355 M10.5,357 l1.5,-2 l1.5,2" fill="none" stroke="#2d5b84" stroke-width="0.9"/><path d="M6,373 h6 l2,2 v6 h-8 z" fill="#fff" stroke="#111" stroke-width="0.9"/><path d="M11,377 h6 l2,2 v6.5 h-8 z" fill="#fff" stroke="#111" stroke-width="0.9"/><rect x="7" y="393" width="10" height="11" rx="1" fill="#d6e0e8" stroke="#b5c4d0" stroke-width="0.8"/><rect x="11" y="399" width="7" height="5.5" fill="#eef2f5" stroke="#b5c4d0" stroke-width="0.7"/><rect x="6" y="412" width="7.5" height="10" fill="#9db7d3" stroke="#6e8fad" stroke-width="0.6"/><rect x="13.5" y="417" width="6" height="10" fill="none" stroke="#5f7282" stroke-width="0.8" stroke-dasharray="1.2,0.8"/><rect x="6" y="433" width="5" height="6.5" fill="#b9c6d6" stroke="#7d8fa5" stroke-width="0.6"/><rect x="9.5" y="436" width="5" height="6.5" fill="#b9c6d6" stroke="#7d8fa5" stroke-width="0.6"/><rect x="12.5" y="439" width="5" height="6.5" fill="#c8d3df" stroke="#7d8fa5" stroke-width="0.6"/><rect x="5.5" y="456" width="4" height="7" fill="#b9c6d6" stroke="#7d8fa5" stroke-width="0.6"/><rect x="10.5" y="458" width="4" height="7" fill="#b9c6d6" stroke="#7d8fa5" stroke-width="0.6"/><rect x="15" y="457" width="4.5" height="7" fill="#b9c6d6" stroke="#7d8fa5" stroke-width="0.6"/><path d="M6,466 Q12,470 19,466" fill="none" stroke="#223" stroke-width="0.8"/><g fill="#888" stroke="#111" stroke-width="0.6"><circle cx="18.0" cy="484.5" r="1.2"/><circle cx="16.5" cy="488.0" r="1.2"/><circle cx="13.0" cy="489.5" r="1.2"/><circle cx="9.5" cy="488.0" r="1.2"/><circle cx="8.0" cy="484.5" r="1.2"/><circle cx="9.5" cy="481.0" r="1.2"/><circle cx="13.0" cy="479.5" r="1.2"/><circle cx="16.5" cy="481.0" r="1.2"/></g><path d="M6,516 L10,509 H19 L15,516 Z" fill="#8fb0cc" stroke="#2b4357" stroke-width="0.7"/><path d="M5,520 L20,506" stroke="#111" stroke-width="0.9"/><path d="M6,527.5 V539.5 M9,527.5 V539.5 M9,527.5 L20,527.5 L17,533.5 L20,539.5 H9" fill="#dfe8ef" stroke="#2b4357" stroke-width="1"/><path d="M16,531 l3,3 l-1,1" fill="#111"/><path d="M6,559 L12,555 V552 M12,555 L20,551 V556 L12,560 Z" fill="#8fb0cc" stroke="#2b4357" stroke-width="0.7"/><path d="M8,553 V548 M12,551 V546 M16,549 V545" stroke="#2b4357" stroke-width="1"/><path d="M6,575 H19 M6,579 H19" stroke="#8fb0cc" stroke-width="1.5"/><path d="M5,582 L20,569" stroke="#111" stroke-width="0.9"/><path d="M6,591.5 H18 V603" stroke="#444" stroke-width="3" fill="none"/><path d="M6,591.5 H18 V603" stroke="#e88" stroke-width="1" stroke-dasharray="1,1" fill="none"/><path d="M7,612 H19 V616 H11 V625 H7 Z" fill="#8fb0cc" stroke="#2b4357" stroke-width="1"/><path d="M13,618 l5,5 l-2,0.4" fill="#111" stroke="#111" stroke-width="0.6"/><rect x="6" y="641" width="6" height="10" rx="2" fill="#2b4357"/><rect x="12.5" y="640" width="7" height="8" fill="#c8c050" stroke="#555" stroke-width="0.6"/><circle cx="13" cy="649" r="2.8" fill="#d02020"/><text x="5.5" y="675" font-size="5.5" font-weight="bold" fill="#2b4357" font-family="Liberation Sans">AUTO</text><text x="6" y="682" font-size="6" font-weight="bold" fill="#2b4357" font-family="Liberation Sans">ABC</text><path d="M6,684 H19" stroke="#2b4357" stroke-width="1.2"/><path d="M6,711 V705 Q6,700 9,700 h1 v4 h4 v-4 h1 Q18,700 18,705 V711 H14 V708 H10 V711 Z" fill="#111"/><path d="M16,718 V724 M18,719 l2,2 l-2,2 z" stroke="#7d8592" stroke-width="0.8" fill="#7d8592"/></svg>
<svg class="a" style="left:0;top:0" width="1920" height="1040" viewBox="0 0 1920 1040" font-family="Liberation Sans, sans-serif">
<defs><pattern id="dots" width="4" height="4" patternUnits="userSpaceOnUse"><rect width="4" height="4" fill="#f3f4f7"/><rect x="0" y="0" width="1" height="1" fill="#8d9db5"/><rect x="2" y="2" width="1" height="1" fill="#8d9db5"/></pattern><pattern id="hatch" width="7" height="7" patternUnits="userSpaceOnUse" patternTransform="rotate(45)"><rect width="7" height="7" fill="#a2a2d2"/><rect width="0.9" height="7" fill="#b9b9c9"/></pattern><clipPath id="cv"><rect x="27" y="139" width="1892" height="817"/></clipPath></defs>
<g clip-path="url(#cv)">
<g fill="none" stroke="#111" stroke-width="1.6"><path d="M362,182.5 H326.8 V927 H364"/><path d="M326.8,182.5 l8,8 M326.8,927 l8,-8"/><path d="M1586,182.5 H1622.3 V927 H1586"/><path d="M1622.3,182.5 l-8,8 M1622.3,927 l-8,-8"/></g>
<g fill="none" stroke="#a8a8a8" stroke-width="1"><path d="M362,190.5 H333.5 V918.5 H364 M362,193 H336 V916 H364"/><path d="M1586,190.5 H1614.5 V918.5 H1586 M1586,193 H1611.8 V916 H1586"/><path d="M598,955 V924.5 H776 M600.5,955 V926.5 H776 M672.5,924.5 V931 M741,924.5 V931"/><path d="M1350.5,955 V924.5 H1178 M1348,955 V926.5 H1178 M1276,924.5 V931 M1207.5,924.5 V931"/><path d="M605,955 V931 H776 M1343.5,955 V931 H1178" stroke-width="2"/></g>
<path d="M689,931 V942 M684.5,942 H693.5 L689,947.5 Z M1261,931 V942 M1256.5,942 H1265.5 L1261,947.5 Z" fill="none" stroke="#a8a8a8" stroke-width="0.9"/>
<rect x="361.5" y="139" width="3.5" height="104" fill="#a9a9a9"/>
<rect x="1583.5" y="139" width="3.5" height="104" fill="#a9a9a9"/>
<rect x="1583.5" y="875" width="3.5" height="81" fill="#a9a9a9"/>
<path d="M866.5,286.5 H1082" stroke="#3f6ea6" stroke-width="1" fill="none"/>
<g shape-rendering="crispEdges">
<rect x="364.0" y="139.0" width="13.0" height="104.0" fill="#1f1f8f" />
<rect x="364.0" y="341.0" width="13.0" height="96.0" fill="#1f1f8f" />
<rect x="364.0" y="533.0" width="13.0" height="75.0" fill="#1f1f8f" />
<rect x="364.0" y="705.0" width="13.0" height="72.0" fill="#1f1f8f" />
<rect x="364.0" y="875.0" width="13.0" height="81.0" fill="#1f1f8f" />
<rect x="377.0" y="216.0" width="226.0" height="6.0" fill="#1f1f8f" />
<rect x="593.0" y="216.0" width="6.0" height="13.0" fill="#1f1f8f" />
<rect x="655.0" y="216.0" width="11.0" height="6.0" fill="#1f1f8f" />
<rect x="660.0" y="139.0" width="6.0" height="90.0" fill="#1f1f8f" />
<rect x="593.0" y="278.0" width="6.0" height="244.0" fill="#1f1f8f" />
<rect x="593.0" y="572.0" width="6.0" height="68.0" fill="#1f1f8f" />
<rect x="593.0" y="690.0" width="6.0" height="7.0" fill="#1f1f8f" />
<rect x="405.0" y="382.0" width="153.0" height="6.0" fill="#1f1f8f" />
<rect x="377.0" y="578.0" width="216.0" height="7.0" fill="#1f1f8f" />
<rect x="405.0" y="739.0" width="183.0" height="7.0" fill="#1f1f8f" />
<rect x="666.0" y="286.0" width="74.0" height="6.0" fill="#1f1f8f" />
<rect x="786.0" y="286.0" width="80.0" height="6.0" fill="#1f1f8f" />
<rect x="861.0" y="286.0" width="5.0" height="83.0" fill="#1f1f8f" />
<rect x="660.0" y="280.0" width="6.0" height="182.0" fill="#1f1f8f" />
<rect x="660.0" y="509.0" width="6.0" height="75.0" fill="#1f1f8f" />
<rect x="666.0" y="382.0" width="186.0" height="6.0" fill="#1f1f8f" />
<rect x="775.0" y="388.0" width="7.0" height="190.0" fill="#1f1f8f" />
<rect x="782.0" y="426.0" width="70.0" height="6.0" fill="#1f1f8f" />
<rect x="660.0" y="578.0" width="126.0" height="6.0" fill="#1f1f8f" />
<rect x="832.0" y="578.0" width="20.0" height="6.0" fill="#1f1f8f" />
<rect x="854.0" y="584.0" width="13.0" height="8.0" fill="#1f1f8f" />
<rect x="854.0" y="644.0" width="13.0" height="53.0" fill="#1f1f8f" />
<rect x="606.0" y="697.0" width="5.0" height="6.0" fill="#1f1f8f" />
<rect x="661.0" y="697.0" width="165.0" height="6.0" fill="#1f1f8f" />
<rect x="867.0" y="697.0" width="108.0" height="6.0" fill="#1f1f8f" />
<rect x="1572.0" y="139.0" width="12.0" height="104.0" fill="#1f1f8f" />
<rect x="1572.0" y="341.0" width="12.0" height="96.0" fill="#1f1f8f" />
<rect x="1572.0" y="533.0" width="12.0" height="75.0" fill="#1f1f8f" />
<rect x="1572.0" y="705.0" width="12.0" height="72.0" fill="#1f1f8f" />
<rect x="1572.0" y="875.0" width="12.0" height="81.0" fill="#1f1f8f" />
<rect x="1346.0" y="216.0" width="226.0" height="6.0" fill="#1f1f8f" />
<rect x="1350.0" y="216.0" width="6.0" height="13.0" fill="#1f1f8f" />
<rect x="1282.0" y="216.0" width="12.0" height="6.0" fill="#1f1f8f" />
<rect x="1282.0" y="139.0" width="6.0" height="90.0" fill="#1f1f8f" />
<rect x="1350.0" y="278.0" width="6.0" height="244.0" fill="#1f1f8f" />
<rect x="1350.0" y="572.0" width="6.0" height="68.0" fill="#1f1f8f" />
<rect x="1350.0" y="690.0" width="6.0" height="7.0" fill="#1f1f8f" />
<rect x="1390.0" y="382.0" width="154.0" height="6.0" fill="#1f1f8f" />
<rect x="1356.0" y="578.0" width="216.0" height="7.0" fill="#1f1f8f" />
<rect x="1360.0" y="739.0" width="184.0" height="7.0" fill="#1f1f8f" />
<rect x="1208.0" y="286.0" width="74.0" height="6.0" fill="#1f1f8f" />
<rect x="1082.0" y="286.0" width="80.0" height="6.0" fill="#1f1f8f" />
<rect x="1082.0" y="286.0" width="6.0" height="83.0" fill="#1f1f8f" />
<rect x="1282.0" y="280.0" width="6.0" height="182.0" fill="#1f1f8f" />
<rect x="1282.0" y="509.0" width="6.0" height="75.0" fill="#1f1f8f" />
<rect x="1096.0" y="382.0" width="186.0" height="6.0" fill="#1f1f8f" />
<rect x="1167.0" y="388.0" width="6.0" height="190.0" fill="#1f1f8f" />
<rect x="1096.0" y="426.0" width="71.0" height="6.0" fill="#1f1f8f" />
<rect x="1162.0" y="578.0" width="126.0" height="6.0" fill="#1f1f8f" />
<rect x="1096.0" y="578.0" width="20.0" height="6.0" fill="#1f1f8f" />
<rect x="1082.0" y="584.0" width="12.0" height="8.0" fill="#1f1f8f" />
<rect x="1082.0" y="644.0" width="12.0" height="53.0" fill="#1f1f8f" />
<rect x="1338.0" y="697.0" width="4.0" height="6.0" fill="#1f1f8f" />
<rect x="1122.0" y="697.0" width="166.0" height="6.0" fill="#1f1f8f" />
<rect x="974.0" y="697.0" width="108.0" height="6.0" fill="#1f1f8f" />
<rect x="962.0" y="139.0" width="13.0" height="278.0" fill="#1f1f8f" />
<rect x="971.0" y="702.0" width="6.0" height="254.0" fill="#1f1f8f" />
<rect x="776.0" y="703.0" width="6.0" height="51.0" fill="#1f1f8f" />
<rect x="776.0" y="826.0" width="6.0" height="110.0" fill="#1f1f8f" />
<rect x="1172.0" y="703.0" width="7.0" height="51.0" fill="#1f1f8f" />
<rect x="1172.0" y="826.0" width="7.0" height="110.0" fill="#1f1f8f" />
<rect x="365.0" y="140.0" width="11.0" height="102.0" fill="url(#dots)"/>
<rect x="365.0" y="342.0" width="11.0" height="94.0" fill="url(#dots)"/>
<rect x="365.0" y="534.0" width="11.0" height="73.0" fill="url(#dots)"/>
<rect x="365.0" y="706.0" width="11.0" height="70.0" fill="url(#dots)"/>
<rect x="365.0" y="876.0" width="11.0" height="79.0" fill="url(#dots)"/>
<rect x="378.0" y="217.0" width="224.0" height="4.0" fill="url(#dots)"/>
<rect x="594.0" y="217.0" width="4.0" height="11.0" fill="url(#dots)"/>
<rect x="656.0" y="217.0" width="9.0" height="4.0" fill="url(#dots)"/>
<rect x="661.0" y="140.0" width="4.0" height="88.0" fill="url(#dots)"/>
<rect x="594.0" y="279.0" width="4.0" height="242.0" fill="url(#dots)"/>
<rect x="594.0" y="573.0" width="4.0" height="66.0" fill="url(#dots)"/>
<rect x="594.0" y="691.0" width="4.0" height="5.0" fill="url(#dots)"/>
<rect x="406.0" y="383.0" width="151.0" height="4.0" fill="url(#dots)"/>
<rect x="378.0" y="579.0" width="214.0" height="5.0" fill="url(#dots)"/>
<rect x="406.0" y="740.0" width="181.0" height="5.0" fill="url(#dots)"/>
<rect x="667.0" y="287.0" width="72.0" height="4.0" fill="url(#dots)"/>
<rect x="787.0" y="287.0" width="78.0" height="4.0" fill="url(#dots)"/>
<rect x="862.0" y="287.0" width="3.0" height="81.0" fill="url(#dots)"/>
<rect x="661.0" y="281.0" width="4.0" height="180.0" fill="url(#dots)"/>
<rect x="661.0" y="510.0" width="4.0" height="73.0" fill="url(#dots)"/>
<rect x="667.0" y="383.0" width="184.0" height="4.0" fill="url(#dots)"/>
<rect x="776.0" y="389.0" width="5.0" height="188.0" fill="url(#dots)"/>
<rect x="783.0" y="427.0" width="68.0" height="4.0" fill="url(#dots)"/>
<rect x="661.0" y="579.0" width="124.0" height="4.0" fill="url(#dots)"/>
<rect x="833.0" y="579.0" width="18.0" height="4.0" fill="url(#dots)"/>
<rect x="855.0" y="585.0" width="11.0" height="6.0" fill="url(#dots)"/>
<rect x="855.0" y="645.0" width="11.0" height="51.0" fill="url(#dots)"/>
<rect x="607.0" y="698.0" width="3.0" height="4.0" fill="url(#dots)"/>
<rect x="662.0" y="698.0" width="163.0" height="4.0" fill="url(#dots)"/>
<rect x="868.0" y="698.0" width="106.0" height="4.0" fill="url(#dots)"/>
<rect x="1573.0" y="140.0" width="10.0" height="102.0" fill="url(#dots)"/>
<rect x="1573.0" y="342.0" width="10.0" height="94.0" fill="url(#dots)"/>
<rect x="1573.0" y="534.0" width="10.0" height="73.0" fill="url(#dots)"/>
<rect x="1573.0" y="706.0" width="10.0" height="70.0" fill="url(#dots)"/>
<rect x="1573.0" y="876.0" width="10.0" height="79.0" fill="url(#dots)"/>
<rect x="1347.0" y="217.0" width="224.0" height="4.0" fill="url(#dots)"/>
<rect x="1351.0" y="217.0" width="4.0" height="11.0" fill="url(#dots)"/>
<rect x="1283.0" y="217.0" width="10.0" height="4.0" fill="url(#dots)"/>
<rect x="1283.0" y="140.0" width="4.0" height="88.0" fill="url(#dots)"/>
<rect x="1351.0" y="279.0" width="4.0" height="242.0" fill="url(#dots)"/>
<rect x="1351.0" y="573.0" width="4.0" height="66.0" fill="url(#dots)"/>
<rect x="1351.0" y="691.0" width="4.0" height="5.0" fill="url(#dots)"/>
<rect x="1391.0" y="383.0" width="152.0" height="4.0" fill="url(#dots)"/>
<rect x="1357.0" y="579.0" width="214.0" height="5.0" fill="url(#dots)"/>
<rect x="1361.0" y="740.0" width="182.0" height="5.0" fill="url(#dots)"/>
<rect x="1209.0" y="287.0" width="72.0" height="4.0" fill="url(#dots)"/>
<rect x="1083.0" y="287.0" width="78.0" height="4.0" fill="url(#dots)"/>
<rect x="1083.0" y="287.0" width="4.0" height="81.0" fill="url(#dots)"/>
<rect x="1283.0" y="281.0" width="4.0" height="180.0" fill="url(#dots)"/>
<rect x="1283.0" y="510.0" width="4.0" height="73.0" fill="url(#dots)"/>
<rect x="1097.0" y="383.0" width="184.0" height="4.0" fill="url(#dots)"/>
<rect x="1168.0" y="389.0" width="4.0" height="188.0" fill="url(#dots)"/>
<rect x="1097.0" y="427.0" width="69.0" height="4.0" fill="url(#dots)"/>
<rect x="1163.0" y="579.0" width="124.0" height="4.0" fill="url(#dots)"/>
<rect x="1097.0" y="579.0" width="18.0" height="4.0" fill="url(#dots)"/>
<rect x="1083.0" y="585.0" width="10.0" height="6.0" fill="url(#dots)"/>
<rect x="1083.0" y="645.0" width="10.0" height="51.0" fill="url(#dots)"/>
<rect x="1339.0" y="698.0" width="2.0" height="4.0" fill="url(#dots)"/>
<rect x="1123.0" y="698.0" width="164.0" height="4.0" fill="url(#dots)"/>
<rect x="975.0" y="698.0" width="106.0" height="4.0" fill="url(#dots)"/>
<rect x="963.0" y="140.0" width="11.0" height="276.0" fill="url(#dots)"/>
<rect x="972.0" y="703.0" width="4.0" height="252.0" fill="url(#dots)"/>
<rect x="777.0" y="704.0" width="4.0" height="49.0" fill="url(#dots)"/>
<rect x="777.0" y="827.0" width="4.0" height="108.0" fill="url(#dots)"/>
<rect x="1173.0" y="704.0" width="5.0" height="49.0" fill="url(#dots)"/>
<rect x="1173.0" y="827.0" width="5.0" height="108.0" fill="url(#dots)"/>
<rect x="375.1" y="217.0" width="3.8" height="4.0" fill="url(#dots)"/>
<rect x="375.1" y="579.0" width="3.8" height="5.0" fill="url(#dots)"/>
<rect x="591.1" y="579.0" width="3.8" height="5.0" fill="url(#dots)"/>
<rect x="664.1" y="287.0" width="3.8" height="4.0" fill="url(#dots)"/>
<rect x="664.1" y="383.0" width="3.8" height="4.0" fill="url(#dots)"/>
<rect x="776.0" y="386.1" width="5.0" height="3.8" fill="url(#dots)"/>
<rect x="780.1" y="427.0" width="3.8" height="4.0" fill="url(#dots)"/>
<rect x="776.0" y="576.1" width="5.0" height="3.8" fill="url(#dots)"/>
<rect x="777.0" y="701.1" width="4.0" height="3.8" fill="url(#dots)"/>
<rect x="972.1" y="698.0" width="4.8" height="4.0" fill="url(#dots)"/>
<rect x="972.0" y="700.1" width="2.0" height="4.8" fill="url(#dots)"/>
<rect x="1570.1" y="217.0" width="3.8" height="4.0" fill="url(#dots)"/>
<rect x="1354.1" y="579.0" width="3.8" height="5.0" fill="url(#dots)"/>
<rect x="1570.1" y="579.0" width="3.8" height="5.0" fill="url(#dots)"/>
<rect x="1280.1" y="287.0" width="3.8" height="4.0" fill="url(#dots)"/>
<rect x="1280.1" y="383.0" width="3.8" height="4.0" fill="url(#dots)"/>
<rect x="1168.0" y="386.1" width="4.0" height="3.8" fill="url(#dots)"/>
<rect x="1168.0" y="576.1" width="4.0" height="3.8" fill="url(#dots)"/>
<rect x="1165.1" y="427.0" width="3.8" height="4.0" fill="url(#dots)"/>
<rect x="1173.0" y="701.1" width="5.0" height="3.8" fill="url(#dots)"/>
<rect x="975.0" y="700.1" width="1.0" height="4.8" fill="url(#dots)"/>
<rect x="364.0" y="369.0" width="41.0" height="19.0" fill="#1f1f8f" />
<rect x="558.0" y="369.0" width="41.0" height="19.0" fill="#1f1f8f" />
<rect x="364.0" y="728.0" width="41.0" height="18.0" fill="#1f1f8f" />
<rect x="588.0" y="696.0" width="18.0" height="50.0" fill="#1f1f8f" />
<rect x="826.0" y="697.0" width="41.0" height="16.0" fill="#1f1f8f" />
<rect x="852.0" y="368.0" width="14.0" height="216.0" fill="#1f1f8f" />
<rect x="1544.0" y="369.0" width="40.0" height="19.0" fill="#1f1f8f" />
<rect x="1350.0" y="369.0" width="40.0" height="19.0" fill="#1f1f8f" />
<rect x="1544.0" y="728.0" width="40.0" height="18.0" fill="#1f1f8f" />
<rect x="1342.0" y="696.0" width="18.0" height="50.0" fill="#1f1f8f" />
<rect x="1082.0" y="697.0" width="40.0" height="16.0" fill="#1f1f8f" />
<rect x="1082.0" y="368.0" width="15.0" height="216.0" fill="#1f1f8f" />
<rect x="866.0" y="417.0" width="216.0" height="14.0" fill="#1f1f8f" />
<rect x="365.0" y="370.0" width="39.0" height="17.0" fill="url(#hatch)"/>
<rect x="559.0" y="370.0" width="39.0" height="17.0" fill="url(#hatch)"/>
<rect x="365.0" y="729.0" width="39.0" height="16.0" fill="url(#hatch)"/>
<rect x="589.0" y="697.0" width="16.0" height="48.0" fill="url(#hatch)"/>
<rect x="827.0" y="698.0" width="39.0" height="14.0" fill="url(#hatch)"/>
<rect x="853.0" y="369.0" width="12.0" height="214.0" fill="url(#hatch)"/>
<rect x="1545.0" y="370.0" width="38.0" height="17.0" fill="url(#hatch)"/>
<rect x="1351.0" y="370.0" width="38.0" height="17.0" fill="url(#hatch)"/>
<rect x="1545.0" y="729.0" width="38.0" height="16.0" fill="url(#hatch)"/>
<rect x="1343.0" y="697.0" width="16.0" height="48.0" fill="url(#hatch)"/>
<rect x="1083.0" y="698.0" width="38.0" height="14.0" fill="url(#hatch)"/>
<rect x="1083.0" y="369.0" width="13.0" height="214.0" fill="url(#hatch)"/>
<rect x="867.0" y="418.0" width="214.0" height="12.0" fill="url(#hatch)"/>
<rect x="864.1" y="418.0" width="3.8" height="12.0" fill="url(#hatch)"/>
<rect x="1080.1" y="418.0" width="3.8" height="12.0" fill="url(#hatch)"/>
</g>
<rect x="933.5" y="498" width="80" height="86" fill="#1f1f8f"/><rect x="934.6" y="499.1" width="77.8" height="84" fill="url(#hatch)"/><rect x="944.5" y="509.3" width="58.2" height="76" fill="#1f1f8f"/><rect x="945.6" y="510.4" width="56" height="76" fill="#fff"/>
<path d="M944,583.5 H1003 M944,580.5 H1003" stroke="#3f6ea6" stroke-width="1" fill="none"/>
<path d="M866,584 H933.5 M1013.5,584 H1082" stroke="#1f1f8f" stroke-width="1" fill="none"/>
</g>
<g fill="none">
<rect x="867.5" y="433" width="209" height="150" stroke="#b4b4b4" stroke-width="1.2"/>
<path d="M1079,433 V583" stroke="#b4b4b4" stroke-width="1.2"/>
<rect x="871" y="437" width="200" height="143" stroke="#b4b4b4" stroke-width="1.2" stroke-dasharray="5,3"/>
<path d="M934.6,432 V492.5" stroke="#b4b4b4" stroke-width="1.8"/>
<path d="M950.8,432 V492.5" stroke="#b4b4b4" stroke-width="1.8"/>
<path d="M966.5,432 V492.5" stroke="#b4b4b4" stroke-width="1.8"/>
<path d="M982.6,432 V492.5" stroke="#b4b4b4" stroke-width="1.8"/>
<path d="M998.8,432 V492.5" stroke="#b4b4b4" stroke-width="1.8"/>
<path d="M1014.7,432 V492.5" stroke="#b4b4b4" stroke-width="1.8"/>
<path d="M918,432 V492.5" stroke="#b4b4b4" stroke-width="1.6" stroke-dasharray="5,3"/>
<path d="M926.5,584 V492 H1020.7 V584" stroke="#b4b4b4" stroke-width="1.4"/>
<path d="M1013.5,499 H1082" stroke="#b4b4b4" stroke-width="1.8"/>
<path d="M1013.5,516 H1082" stroke="#b4b4b4" stroke-width="1.8"/>
<path d="M1013.5,532 H1082" stroke="#b4b4b4" stroke-width="1.8"/>
<path d="M1013.5,548 H1082" stroke="#b4b4b4" stroke-width="1.8"/>
<path d="M1013.5,564 H1082" stroke="#b4b4b4" stroke-width="1.8"/>
<path d="M1013.5,579 H1082" stroke="#b4b4b4" stroke-width="1.8"/>
<path d="M866.5,497.3 H933" stroke="#b4b4b4" stroke-width="2.2" stroke-dasharray="6,4"/>
<path d="M866.5,513.5 H933" stroke="#b4b4b4" stroke-width="2.2" stroke-dasharray="6,4"/>
<path d="M866.5,529 H933" stroke="#b4b4b4" stroke-width="2.2" stroke-dasharray="6,4"/>
<path d="M866.5,545 H933" stroke="#b4b4b4" stroke-width="2.2" stroke-dasharray="6,4"/>
<path d="M866.5,561 H933" stroke="#b4b4b4" stroke-width="2.2" stroke-dasharray="6,4"/>
<path d="M866.5,577 H933" stroke="#b4b4b4" stroke-width="2.2" stroke-dasharray="6,4"/>
<path d="M1047,576 V464.3 H951" stroke="#444" stroke-width="1"/>
<path d="M955,461 L949.5,464.3 L955,467.5" stroke="#444" stroke-width="1"/>
<path d="M949.6,464.3 H899.5 V574.6" stroke="#444" stroke-width="1" stroke-dasharray="4,2.5"/>
<path d="M896.5,570 L899.5,575 L902.5,570" stroke="#444" stroke-width="1"/>
<circle cx="1047" cy="579.7" r="3.4" stroke="#555" stroke-width="1"/>
<path d="M936,425 L953,505 M942,425 L957.5,504" stroke="#444" stroke-width="0.9"/>
</g>
<g font-size="7.5" fill="#4b3a2c" text-anchor="middle">
<text x="924" y="446">12</text>
<text x="940" y="446">11</text>
<text x="956" y="446">10</text>
<text x="970.6" y="446">9</text>
<text x="986.5" y="446">8</text>
<text x="1003" y="446">7</text>
<text x="1065.6" y="492.20000000000005">6</text>
<text x="1065.6" y="508.1">5</text>
<text x="1065.6" y="524.2">4</text>
<text x="1065.6" y="540.1">3</text>
<text x="1065.6" y="556.2">2</text>
<text x="1065.6" y="572.2">1</text>
<text x="879" y="509.1">13</text>
<text x="879" y="525.1">14</text>
<text x="879" y="541.1">15</text>
<text x="879" y="557.1">16</text>
<text x="879" y="573.1">17</text>
<text x="879" y="588.6">18</text>
</g>
<text transform="translate(1043,540) rotate(-90)" font-size="6.5" fill="#c8c8c8" text-anchor="middle" letter-spacing="0.5">18 STEPS 16.7/28.0</text>
<g clip-path="url(#cv)">
<rect x="364.0" y="242.0" width="13" height="3" fill="#fff" stroke="#1f1f8f" stroke-width="1"/>
<rect x="364.0" y="339.0" width="13" height="3" fill="#fff" stroke="#1f1f8f" stroke-width="1"/>
<rect x="369.5" y="245.0" width="4.2" height="48.0" fill="#2b5689"/>
<rect x="366.6" y="292.0" width="4.2" height="47.0" fill="#2b5689"/>
<path d="M337.6,242 V342 M339.20000000000005,242 V342" stroke="#a0a0a0" stroke-width="0.8" fill="none"/>
<rect x="336.6" y="240.5" width="3" height="3" fill="#9b6fd6"/><rect x="336.6" y="340.5" width="3" height="3" fill="#9b6fd6"/>
<rect x="367.0" y="290.0" width="7" height="4" fill="none" stroke="#2b5689" stroke-width="1"/>
<rect x="364.0" y="436.0" width="13" height="3" fill="#fff" stroke="#1f1f8f" stroke-width="1"/>
<rect x="364.0" y="531.0" width="13" height="3" fill="#fff" stroke="#1f1f8f" stroke-width="1"/>
<rect x="369.5" y="439.0" width="4.2" height="47.0" fill="#2b5689"/>
<rect x="366.6" y="485.0" width="4.2" height="46.0" fill="#2b5689"/>
<path d="M337.6,436 V534 M339.20000000000005,436 V534" stroke="#a0a0a0" stroke-width="0.8" fill="none"/>
<rect x="336.6" y="434.5" width="3" height="3" fill="#9b6fd6"/><rect x="336.6" y="532.5" width="3" height="3" fill="#9b6fd6"/>
<rect x="367.0" y="483.0" width="7" height="4" fill="none" stroke="#2b5689" stroke-width="1"/>
<rect x="364.0" y="607.0" width="13" height="3" fill="#fff" stroke="#1f1f8f" stroke-width="1"/>
<rect x="364.0" y="703.0" width="13" height="3" fill="#fff" stroke="#1f1f8f" stroke-width="1"/>
<rect x="369.5" y="610.0" width="4.2" height="47.5" fill="#2b5689"/>
<rect x="366.6" y="656.5" width="4.2" height="46.5" fill="#2b5689"/>
<path d="M337.6,607 V706 M339.20000000000005,607 V706" stroke="#a0a0a0" stroke-width="0.8" fill="none"/>
<rect x="336.6" y="605.5" width="3" height="3" fill="#9b6fd6"/><rect x="336.6" y="704.5" width="3" height="3" fill="#9b6fd6"/>
<rect x="367.0" y="654.5" width="7" height="4" fill="none" stroke="#2b5689" stroke-width="1"/>
<rect x="364.0" y="776.0" width="13" height="3" fill="#fff" stroke="#1f1f8f" stroke-width="1"/>
<rect x="364.0" y="873.0" width="13" height="3" fill="#fff" stroke="#1f1f8f" stroke-width="1"/>
<rect x="369.5" y="779.0" width="4.2" height="48.0" fill="#2b5689"/>
<rect x="366.6" y="826.0" width="4.2" height="47.0" fill="#2b5689"/>
<path d="M337.6,776 V876 M339.20000000000005,776 V876" stroke="#a0a0a0" stroke-width="0.8" fill="none"/>
<rect x="336.6" y="774.5" width="3" height="3" fill="#9b6fd6"/><rect x="336.6" y="874.5" width="3" height="3" fill="#9b6fd6"/>
<rect x="367.0" y="824.0" width="7" height="4" fill="none" stroke="#2b5689" stroke-width="1"/>
<rect x="1571.5" y="242.0" width="13" height="3" fill="#fff" stroke="#1f1f8f" stroke-width="1"/>
<rect x="1571.5" y="339.0" width="13" height="3" fill="#fff" stroke="#1f1f8f" stroke-width="1"/>
<rect x="1577.0" y="245.0" width="4.2" height="48.0" fill="#2b5689"/>
<rect x="1574.4" y="292.0" width="4.2" height="47.0" fill="#2b5689"/>
<path d="M1608.8,242 V342 M1610.3999999999999,242 V342" stroke="#a0a0a0" stroke-width="0.8" fill="none"/>
<rect x="1607.8" y="240.5" width="3" height="3" fill="#9b6fd6"/><rect x="1607.8" y="340.5" width="3" height="3" fill="#9b6fd6"/>
<rect x="1574.5" y="290.0" width="7" height="4" fill="none" stroke="#2b5689" stroke-width="1"/>
<rect x="1571.5" y="436.0" width="13" height="3" fill="#fff" stroke="#1f1f8f" stroke-width="1"/>
<rect x="1571.5" y="531.0" width="13" height="3" fill="#fff" stroke="#1f1f8f" stroke-width="1"/>
<rect x="1577.0" y="439.0" width="4.2" height="47.0" fill="#2b5689"/>
<rect x="1574.4" y="485.0" width="4.2" height="46.0" fill="#2b5689"/>
<path d="M1608.8,436 V534 M1610.3999999999999,436 V534" stroke="#a0a0a0" stroke-width="0.8" fill="none"/>
<rect x="1607.8" y="434.5" width="3" height="3" fill="#9b6fd6"/><rect x="1607.8" y="532.5" width="3" height="3" fill="#9b6fd6"/>
<rect x="1574.5" y="483.0" width="7" height="4" fill="none" stroke="#2b5689" stroke-width="1"/>
<rect x="1571.5" y="607.0" width="13" height="3" fill="#fff" stroke="#1f1f8f" stroke-width="1"/>
<rect x="1571.5" y="703.0" width="13" height="3" fill="#fff" stroke="#1f1f8f" stroke-width="1"/>
<rect x="1577.0" y="610.0" width="4.2" height="47.5" fill="#2b5689"/>
<rect x="1574.4" y="656.5" width="4.2" height="46.5" fill="#2b5689"/>
<path d="M1608.8,607 V706 M1610.3999999999999,607 V706" stroke="#a0a0a0" stroke-width="0.8" fill="none"/>
<rect x="1607.8" y="605.5" width="3" height="3" fill="#9b6fd6"/><rect x="1607.8" y="704.5" width="3" height="3" fill="#9b6fd6"/>
<rect x="1574.5" y="654.5" width="7" height="4" fill="none" stroke="#2b5689" stroke-width="1"/>
<rect x="1571.5" y="776.0" width="13" height="3" fill="#fff" stroke="#1f1f8f" stroke-width="1"/>
<rect x="1571.5" y="873.0" width="13" height="3" fill="#fff" stroke="#1f1f8f" stroke-width="1"/>
<rect x="1577.0" y="779.0" width="4.2" height="48.0" fill="#2b5689"/>
<rect x="1574.4" y="826.0" width="4.2" height="47.0" fill="#2b5689"/>
<path d="M1608.8,776 V876 M1610.3999999999999,776 V876" stroke="#a0a0a0" stroke-width="0.8" fill="none"/>
<rect x="1607.8" y="774.5" width="3" height="3" fill="#9b6fd6"/><rect x="1607.8" y="874.5" width="3" height="3" fill="#9b6fd6"/>
<rect x="1574.5" y="824.0" width="7" height="4" fill="none" stroke="#2b5689" stroke-width="1"/>
<path d="M779.5,755 V790 M777.5,790 V826" stroke="#2b5689" stroke-width="2.6" fill="none"/>
<rect x="775.5" y="753" width="6" height="3" fill="#fff" stroke="#1f1f8f" stroke-width="1"/>
<rect x="775.5" y="824" width="6" height="3" fill="#fff" stroke="#1f1f8f" stroke-width="1"/>
<path d="M778.5,936 V956" stroke="#2b5689" stroke-width="2.2" fill="none"/>
<path d="M778.5,938 H732.5 Q731.5,946 733.5,956" stroke="#3f6ea6" stroke-width="1" fill="none"/>
<path d="M1176.6,755 V790 M1174.6,790 V826" stroke="#2b5689" stroke-width="2.6" fill="none"/>
<rect x="1172.6" y="753" width="6" height="3" fill="#fff" stroke="#1f1f8f" stroke-width="1"/>
<rect x="1172.6" y="824" width="6" height="3" fill="#fff" stroke="#1f1f8f" stroke-width="1"/>
<path d="M1175.6,936 V956" stroke="#2b5689" stroke-width="2.2" fill="none"/>
<path d="M1175.6,938 H1221.6 Q1222.6,946 1220.6,956" stroke="#3f6ea6" stroke-width="1" fill="none"/>
</g>
<g fill="none" clip-path="url(#cv)" shape-rendering="crispEdges">
<path d="M654,218 L654,169 A49.0,49.0 0 0 0 605,218" stroke="#3f6ea6" stroke-width="1.1"/>
<path d="M605,218 H654" stroke="#2b5689" stroke-width="2.3"/>
<path d="M596,229 L548,229 A48.0,48.0 0 0 0 596,277" stroke="#3f6ea6" stroke-width="1.1"/>
<path d="M596,229 V278" stroke="#2b5689" stroke-width="2.3"/>
<path d="M663,278 L710,278 A47.0,47.0 0 0 0 663,231" stroke="#3f6ea6" stroke-width="1.1"/>
<path d="M663,231 V278" stroke="#2b5689" stroke-width="2.3"/>
<path d="M742,289 L742,333 A44.0,44.0 0 0 0 786,289" stroke="#3f6ea6" stroke-width="1.1"/>
<path d="M741,289 H786" stroke="#2b5689" stroke-width="2.3"/>
<path d="M663,507 L706,507 A43.0,43.0 0 0 0 663,464" stroke="#3f6ea6" stroke-width="1.1"/>
<path d="M663,464 V508" stroke="#2b5689" stroke-width="2.3"/>
<path d="M596,570 L548,570 A48.0,48.0 0 0 1 596,522" stroke="#3f6ea6" stroke-width="1.1"/>
<path d="M596,522 V572" stroke="#2b5689" stroke-width="2.3"/>
<path d="M596,688 L548,688 A48.0,48.0 0 0 1 596,640" stroke="#3f6ea6" stroke-width="1.1"/>
<path d="M596,640 V690" stroke="#2b5689" stroke-width="2.3"/>
<path d="M614,700 L614,746 A46.0,46.0 0 0 0 660,700" stroke="#3f6ea6" stroke-width="1.1"/>
<path d="M611,700 H660" stroke="#2b5689" stroke-width="2.3"/>
<path d="M855,591.5 L800,591.5 A55.0,55.0 0 0 0 855,646.5" stroke="#3f6ea6" stroke-width="1.1"/>
<path d="M854.2,592 V644.5" stroke="#2b5689" stroke-width="2.3"/>
<path d="M789,581 L789,538 A43.0,43.0 0 0 1 832,581" stroke="#3f6ea6" stroke-width="1.1"/>
<path d="M786,581 H832" stroke="#2b5689" stroke-width="2.3"/>
<path d="M1294.5,218 L1294.5,169 A49.0,49.0 0 0 1 1343.5,218" stroke="#3f6ea6" stroke-width="1.1"/>
<path d="M1343.5,218H1294.5" stroke="#2b5689" stroke-width="2.3"/>
<path d="M1352.5,229 L1400.5,229 A48.0,48.0 0 0 1 1352.5,277" stroke="#3f6ea6" stroke-width="1.1"/>
<path d="M1352.5,229V278" stroke="#2b5689" stroke-width="2.3"/>
<path d="M1285.5,278 L1238.5,278 A47.0,47.0 0 0 1 1285.5,231" stroke="#3f6ea6" stroke-width="1.1"/>
<path d="M1285.5,231V278" stroke="#2b5689" stroke-width="2.3"/>
<path d="M1206.5,289 L1206.5,333 A44.0,44.0 0 0 1 1162.5,289" stroke="#3f6ea6" stroke-width="1.1"/>
<path d="M1207.5,289H1162.5" stroke="#2b5689" stroke-width="2.3"/>
<path d="M1285.5,507 L1242.5,507 A43.0,43.0 0 0 1 1285.5,464" stroke="#3f6ea6" stroke-width="1.1"/>
<path d="M1285.5,464V508" stroke="#2b5689" stroke-width="2.3"/>
<path d="M1352.5,570 L1400.5,570 A48.0,48.0 0 0 0 1352.5,522" stroke="#3f6ea6" stroke-width="1.1"/>
<path d="M1352.5,522V572" stroke="#2b5689" stroke-width="2.3"/>
<path d="M1352.5,688 L1400.5,688 A48.0,48.0 0 0 0 1352.5,640" stroke="#3f6ea6" stroke-width="1.1"/>
<path d="M1352.5,640V690" stroke="#2b5689" stroke-width="2.3"/>
<path d="M1334.5,700 L1334.5,746 A46.0,46.0 0 0 1 1288.5,700" stroke="#3f6ea6" stroke-width="1.1"/>
<path d="M1337.5,700H1288.5" stroke="#2b5689" stroke-width="2.3"/>
<path d="M1093.5,591.5 L1148.5,591.5 A55.0,55.0 0 0 1 1093.5,646.5" stroke="#3f6ea6" stroke-width="1.1"/>
<path d="M1094.3,592V644.5" stroke="#2b5689" stroke-width="2.3"/>
<path d="M1159.5,581 L1159.5,538 A43.0,43.0 0 0 0 1116.5,581" stroke="#3f6ea6" stroke-width="1.1"/>
<path d="M1162.5,581H1116.5" stroke="#2b5689" stroke-width="2.3"/>
</g>
<g fill="#9d6fe0" shape-rendering="crispEdges">
<rect x="363" y="190" width="3" height="3"/>
<rect x="335" y="190" width="3" height="3"/>
<rect x="363" y="214" width="3" height="3"/>
<rect x="363" y="240" width="3" height="3"/>
<rect x="592" y="214" width="3" height="3"/>
<rect x="659" y="214" width="3" height="3"/>
<rect x="592" y="285" width="3" height="3"/>
<rect x="598" y="285" width="3" height="3"/>
<rect x="659" y="285" width="3" height="3"/>
<rect x="865" y="285" width="3" height="3"/>
<rect x="363" y="368" width="3" height="3"/>
<rect x="363" y="387" width="3" height="3"/>
<rect x="557" y="387" width="3" height="3"/>
<rect x="598" y="387" width="3" height="3"/>
<rect x="659" y="387" width="3" height="3"/>
<rect x="774" y="387" width="3" height="3"/>
<rect x="851" y="368" width="3" height="3"/>
<rect x="865" y="368" width="3" height="3"/>
<rect x="865" y="387" width="3" height="3"/>
<rect x="774" y="430" width="3" height="3"/>
<rect x="865" y="430" width="3" height="3"/>
<rect x="592" y="577" width="3" height="3"/>
<rect x="598" y="577" width="3" height="3"/>
<rect x="659" y="583" width="3" height="3"/>
<rect x="774" y="577" width="3" height="3"/>
<rect x="851" y="583" width="3" height="3"/>
<rect x="865" y="583" width="3" height="3"/>
<rect x="933" y="583" width="3" height="3"/>
<rect x="944" y="583" width="3" height="3"/>
<rect x="592" y="695" width="3" height="3"/>
<rect x="598" y="695" width="3" height="3"/>
<rect x="605" y="695" width="3" height="3"/>
<rect x="587" y="744" width="3" height="3"/>
<rect x="598" y="744" width="3" height="3"/>
<rect x="825" y="696" width="3" height="3"/>
<rect x="865" y="696" width="3" height="3"/>
<rect x="363" y="727" width="3" height="3"/>
<rect x="363" y="744" width="3" height="3"/>
<rect x="597" y="923" width="3" height="3"/>
<rect x="600" y="926" width="3" height="3"/>
<rect x="775" y="921" width="3" height="3"/>
<rect x="775" y="926" width="3" height="3"/>
<rect x="363" y="917" width="3" height="3"/>
<rect x="336" y="917" width="3" height="3"/>
<rect x="1583" y="190" width="3" height="3"/>
<rect x="1611" y="190" width="3" height="3"/>
<rect x="1583" y="214" width="3" height="3"/>
<rect x="1583" y="240" width="3" height="3"/>
<rect x="1355" y="214" width="3" height="3"/>
<rect x="1287" y="214" width="3" height="3"/>
<rect x="1355" y="285" width="3" height="3"/>
<rect x="1349" y="285" width="3" height="3"/>
<rect x="1287" y="285" width="3" height="3"/>
<rect x="1081" y="285" width="3" height="3"/>
<rect x="1583" y="368" width="3" height="3"/>
<rect x="1583" y="387" width="3" height="3"/>
<rect x="1389" y="387" width="3" height="3"/>
<rect x="1349" y="387" width="3" height="3"/>
<rect x="1287" y="387" width="3" height="3"/>
<rect x="1173" y="387" width="3" height="3"/>
<rect x="1095" y="368" width="3" height="3"/>
<rect x="1081" y="368" width="3" height="3"/>
<rect x="1081" y="387" width="3" height="3"/>
<rect x="1173" y="430" width="3" height="3"/>
<rect x="1081" y="430" width="3" height="3"/>
<rect x="1355" y="577" width="3" height="3"/>
<rect x="1349" y="577" width="3" height="3"/>
<rect x="1287" y="583" width="3" height="3"/>
<rect x="1173" y="577" width="3" height="3"/>
<rect x="1095" y="583" width="3" height="3"/>
<rect x="1081" y="583" width="3" height="3"/>
<rect x="1013" y="583" width="3" height="3"/>
<rect x="1003" y="583" width="3" height="3"/>
<rect x="1355" y="695" width="3" height="3"/>
<rect x="1349" y="695" width="3" height="3"/>
<rect x="1341" y="695" width="3" height="3"/>
<rect x="1359" y="744" width="3" height="3"/>
<rect x="1349" y="744" width="3" height="3"/>
<rect x="1121" y="696" width="3" height="3"/>
<rect x="1081" y="696" width="3" height="3"/>
<rect x="1583" y="727" width="3" height="3"/>
<rect x="1583" y="744" width="3" height="3"/>
<rect x="1349" y="923" width="3" height="3"/>
<rect x="1347" y="926" width="3" height="3"/>
<rect x="1171" y="921" width="3" height="3"/>
<rect x="1171" y="926" width="3" height="3"/>
<rect x="1583" y="917" width="3" height="3"/>
<rect x="1611" y="917" width="3" height="3"/>
<rect x="973" y="285" width="3" height="3"/>
<rect x="973" y="696" width="3" height="3"/>
<rect x="1002" y="583" width="3" height="3"/>
<rect x="1012" y="583" width="3" height="3"/>
</g>
<g clip-path="url(#cv)" shape-rendering="crispEdges">
<path d="M350,292 H402" stroke="#2f2318" stroke-width="1" fill="none"/><text x="393" y="289.2" font-size="8.2" letter-spacing="1" fill="#4b3a2c" text-anchor="middle">180</text><text x="392.5" y="302.0" font-size="8.2" letter-spacing="1" fill="#4b3a2c" text-anchor="middle">243</text><polygon points="340.5,285.4 346.1,285.4 349.9,289.4 349.9,294.6 346.1,298.6 340.5,298.6 336.7,294.6 336.7,289.4" fill="none" stroke="#2a1a0a" stroke-width="1"/><text x="343.3" y="294" font-size="5" fill="#8a7a6a" text-anchor="middle">P17</text>
<path d="M350,485.5 H402" stroke="#2f2318" stroke-width="1" fill="none"/><text x="393" y="482.7" font-size="8.2" letter-spacing="1" fill="#4b3a2c" text-anchor="middle">180</text><text x="392.5" y="495.5" font-size="8.2" letter-spacing="1" fill="#4b3a2c" text-anchor="middle">243</text><polygon points="340.5,478.9 346.1,478.9 349.9,482.9 349.9,488.1 346.1,492.1 340.5,492.1 336.7,488.1 336.7,482.9" fill="none" stroke="#2a1a0a" stroke-width="1"/><text x="343.3" y="487.5" font-size="5" fill="#8a7a6a" text-anchor="middle">P16</text>
<path d="M350,655.2 H402" stroke="#2f2318" stroke-width="1" fill="none"/><text x="393" y="652.4000000000001" font-size="8.2" letter-spacing="1" fill="#4b3a2c" text-anchor="middle">180</text><text x="392.5" y="665.2" font-size="8.2" letter-spacing="1" fill="#4b3a2c" text-anchor="middle">243</text><polygon points="340.5,648.6 346.1,648.6 349.9,652.6 349.9,657.8 346.1,661.8 340.5,661.8 336.7,657.8 336.7,652.6" fill="none" stroke="#2a1a0a" stroke-width="1"/><text x="343.3" y="657.2" font-size="5" fill="#8a7a6a" text-anchor="middle">P15</text>
<path d="M350,825 H402" stroke="#2f2318" stroke-width="1" fill="none"/><text x="393" y="822.2" font-size="8.2" letter-spacing="1" fill="#4b3a2c" text-anchor="middle">180</text><text x="392.5" y="835.0" font-size="8.2" letter-spacing="1" fill="#4b3a2c" text-anchor="middle">243</text><polygon points="340.5,818.4 346.1,818.4 349.9,822.4 349.9,827.6 346.1,831.6 340.5,831.6 336.7,827.6 336.7,822.4" fill="none" stroke="#2a1a0a" stroke-width="1"/><text x="343.3" y="827" font-size="5" fill="#8a7a6a" text-anchor="middle">P14</text>
<path d="M1557,292 H1610" stroke="#2f2318" stroke-width="1" fill="none"/><text x="1600.8" y="289.2" font-size="8.2" letter-spacing="1" fill="#4b3a2c" text-anchor="middle">180</text><text x="1600.8" y="302.3" font-size="8.2" letter-spacing="1" fill="#4b3a2c" text-anchor="middle">243</text><polygon points="1547.2,285.4 1552.8,285.4 1556.6,289.4 1556.6,294.6 1552.8,298.6 1547.2,298.6 1543.4,294.6 1543.4,289.4" fill="none" stroke="#2a1a0a" stroke-width="1"/><text x="1550" y="294" font-size="5" fill="#8a7a6a" text-anchor="middle">P37</text>
<path d="M1557,485 H1610" stroke="#2f2318" stroke-width="1" fill="none"/><text x="1600.8" y="482.2" font-size="8.2" letter-spacing="1" fill="#4b3a2c" text-anchor="middle">180</text><text x="1600.8" y="495.3" font-size="8.2" letter-spacing="1" fill="#4b3a2c" text-anchor="middle">243</text><polygon points="1547.2,478.4 1552.8,478.4 1556.6,482.4 1556.6,487.6 1552.8,491.6 1547.2,491.6 1543.4,487.6 1543.4,482.4" fill="none" stroke="#2a1a0a" stroke-width="1"/><text x="1550" y="487" font-size="5" fill="#8a7a6a" text-anchor="middle">P36</text>
<path d="M1557,655.2 H1610" stroke="#2f2318" stroke-width="1" fill="none"/><text x="1600.8" y="652.4000000000001" font-size="8.2" letter-spacing="1" fill="#4b3a2c" text-anchor="middle">180</text><text x="1600.8" y="665.5" font-size="8.2" letter-spacing="1" fill="#4b3a2c" text-anchor="middle">243</text><polygon points="1547.2,648.6 1552.8,648.6 1556.6,652.6 1556.6,657.8 1552.8,661.8 1547.2,661.8 1543.4,657.8 1543.4,652.6" fill="none" stroke="#2a1a0a" stroke-width="1"/><text x="1550" y="657.2" font-size="5" fill="#8a7a6a" text-anchor="middle">P35</text>
<path d="M1557,825 H1610" stroke="#2f2318" stroke-width="1" fill="none"/><text x="1600.8" y="822.2" font-size="8.2" letter-spacing="1" fill="#4b3a2c" text-anchor="middle">180</text><text x="1600.8" y="835.3" font-size="8.2" letter-spacing="1" fill="#4b3a2c" text-anchor="middle">243</text><polygon points="1547.2,818.4 1552.8,818.4 1556.6,822.4 1556.6,827.6 1552.8,831.6 1547.2,831.6 1543.4,827.6 1543.4,822.4" fill="none" stroke="#2a1a0a" stroke-width="1"/><text x="1550" y="827" font-size="5" fill="#8a7a6a" text-anchor="middle">P34</text>
<path d="M628.4,186.3 V238.6" stroke="#2f2318" stroke-width="1" fill="none"/><text transform="translate(625.5,200) rotate(-90)" font-size="10.5" fill="#222" text-anchor="middle">90</text><text transform="translate(639,197) rotate(-90)" font-size="10.5" fill="#222" text-anchor="middle">243</text><polygon points="625.2,238.4 630.8,238.4 634.6,242.4 634.6,247.6 630.8,251.6 625.2,251.6 621.4,247.6 621.4,242.4" fill="none" stroke="#2a1a0a" stroke-width="1"/><text x="628" y="247" font-size="5" fill="#8a7a6a" text-anchor="middle">P01</text>
<path d="M563,252.4 H615.2" stroke="#2f2318" stroke-width="1" fill="none"/><text x="576.8" y="249.5" font-size="8.2" letter-spacing="1" fill="#4b3a2c" text-anchor="middle">90</text><text x="573.8" y="262.5" font-size="8.2" letter-spacing="1" fill="#4b3a2c" text-anchor="middle">243</text><polygon points="618.9,245.4 624.5,245.4 628.3,249.4 628.3,254.6 624.5,258.6 618.9,258.6 615.1,254.6 615.1,249.4" fill="none" stroke="#2a1a0a" stroke-width="1"/><text x="621.7" y="254" font-size="5" fill="#8a7a6a" text-anchor="middle">P18</text>
<path d="M631,254.4 H682.3" stroke="#2f2318" stroke-width="1" fill="none"/><text x="644.8" y="251.5" font-size="8.2" letter-spacing="1" fill="#4b3a2c" text-anchor="middle">90</text><text x="641.9" y="264.8" font-size="8.2" letter-spacing="1" fill="#4b3a2c" text-anchor="middle">243</text><polygon points="686.8,247.4 692.4,247.4 696.2,251.4 696.2,256.6 692.4,260.6 686.8,260.6 683.0,256.6 683.0,251.4" fill="none" stroke="#2a1a0a" stroke-width="1"/><text x="689.6" y="256" font-size="5" fill="#8a7a6a" text-anchor="middle">P22</text>
<path d="M763.5,257.3 V307.6" stroke="#2f2318" stroke-width="1" fill="none"/><text transform="translate(761.2,270.8) rotate(-90)" font-size="10.5" fill="#222" text-anchor="middle">80</text><text transform="translate(773.5,268.2) rotate(-90)" font-size="10.5" fill="#222" text-anchor="middle">243</text><polygon points="760.2,309.4 765.8,309.4 769.6,313.4 769.6,318.6 765.8,322.6 760.2,322.6 756.4,318.6 756.4,313.4" fill="none" stroke="#2a1a0a" stroke-width="1"/><text x="763" y="318" font-size="5" fill="#8a7a6a" text-anchor="middle">P04</text>
<path d="M631,485.5 H681.6" stroke="#2f2318" stroke-width="1" fill="none"/><text x="644.5" y="482.5" font-size="8.2" letter-spacing="1" fill="#4b3a2c" text-anchor="middle">80</text><text x="641.5" y="495.7" font-size="8.2" letter-spacing="1" fill="#4b3a2c" text-anchor="middle">243</text><polygon points="687.1,478.9 692.7,478.9 696.5,482.9 696.5,488.1 692.7,492.1 687.1,492.1 683.3,488.1 683.3,482.9" fill="none" stroke="#2a1a0a" stroke-width="1"/><text x="689.9" y="487.5" font-size="5" fill="#8a7a6a" text-anchor="middle">P21</text>
<path d="M563,547.4 H615" stroke="#2f2318" stroke-width="1" fill="none"/><text x="576.5" y="544.5" font-size="8.2" letter-spacing="1" fill="#4b3a2c" text-anchor="middle">90</text><text x="573.5" y="557.5" font-size="8.2" letter-spacing="1" fill="#4b3a2c" text-anchor="middle">243</text><polygon points="619.2,540.4 624.8,540.4 628.6,544.4 628.6,549.6 624.8,553.6 619.2,553.6 615.4,549.6 615.4,544.4" fill="none" stroke="#2a1a0a" stroke-width="1"/><text x="622" y="549" font-size="5" fill="#8a7a6a" text-anchor="middle">P20</text>
<path d="M563,664.5 H615" stroke="#2f2318" stroke-width="1" fill="none"/><text x="576.5" y="662.5" font-size="8.2" letter-spacing="1" fill="#4b3a2c" text-anchor="middle">90</text><text x="573.5" y="675.0" font-size="8.2" letter-spacing="1" fill="#4b3a2c" text-anchor="middle">243</text><polygon points="619.2,657.9 624.8,657.9 628.6,661.9 628.6,667.1 624.8,671.1 619.2,671.1 615.4,667.1 615.4,661.9" fill="none" stroke="#2a1a0a" stroke-width="1"/><text x="622" y="666.5" font-size="5" fill="#8a7a6a" text-anchor="middle">P19</text>
<path d="M636.7,680.9 V730" stroke="#2f2318" stroke-width="1" fill="none"/><text transform="translate(634.3,716.4) rotate(-90)" font-size="10.5" fill="#222" text-anchor="middle">90</text><text transform="translate(646.7,718.4) rotate(-90)" font-size="10.5" fill="#222" text-anchor="middle">243</text><polygon points="633.4,665.0 639.0,665.0 642.8,669.0 642.8,674.2 639.0,678.2 633.4,678.2 629.6,674.2 629.6,669.0" fill="none" stroke="#2a1a0a" stroke-width="1"/><text x="636.2" y="673.6" font-size="5" fill="#8a7a6a" text-anchor="middle">P08</text>
<path d="M809.4,549 V601" stroke="#2f2318" stroke-width="1" fill="none"/><text transform="translate(806.9,562.5) rotate(-90)" font-size="10.5" fill="#222" text-anchor="middle">80</text><text transform="translate(820,559.6) rotate(-90)" font-size="10.5" fill="#222" text-anchor="middle">243</text><polygon points="806.0,601.4 811.6,601.4 815.4,605.4 815.4,610.6 811.6,614.6 806.0,614.6 802.2,610.6 802.2,605.4" fill="none" stroke="#2a1a0a" stroke-width="1"/><text x="808.8" y="610" font-size="5" fill="#8a7a6a" text-anchor="middle">P05</text>
<path d="M828,618.4 H880" stroke="#2f2318" stroke-width="1" fill="none"/><text x="836" y="615.4" font-size="8.2" letter-spacing="1" fill="#4b3a2c" text-anchor="middle">100</text><text x="836" y="628.5" font-size="8.2" letter-spacing="1" fill="#4b3a2c" text-anchor="middle">243</text><polygon points="883.9,611.8 889.5,611.8 893.3,615.8 893.3,621.0 889.5,625.0 883.9,625.0 880.1,621.0 880.1,615.8" fill="none" stroke="#2a1a0a" stroke-width="1"/><text x="886.7" y="620.4" font-size="5" fill="#8a7a6a" text-anchor="middle">P25</text>
<path d="M973.6,559 V612.4" stroke="#2f2318" stroke-width="1" fill="none"/><text transform="translate(970.8,600) rotate(-90)" font-size="10.5" fill="#222" text-anchor="middle">100</text><text transform="translate(983.6,600) rotate(-90)" font-size="10.5" fill="#222" text-anchor="middle">243</text><polygon points="970.2,546.4 975.8,546.4 979.6,550.4 979.6,555.6 975.8,559.6 970.2,559.6 966.4,555.6 966.4,550.4" fill="none" stroke="#2a1a0a" stroke-width="1"/><text x="973" y="555" font-size="5" fill="#8a7a6a" text-anchor="middle">P00</text>
<path d="M1319.5,186 V239" stroke="#2f2318" stroke-width="1" fill="none"/><text transform="translate(1316.6,200) rotate(-90)" font-size="10.5" fill="#222" text-anchor="middle">90</text><text transform="translate(1330.4,197) rotate(-90)" font-size="10.5" fill="#222" text-anchor="middle">243</text><polygon points="1315.7,238.4 1321.3,238.4 1325.1,242.4 1325.1,247.6 1321.3,251.6 1315.7,251.6 1311.9,247.6 1311.9,242.4" fill="none" stroke="#2a1a0a" stroke-width="1"/><text x="1318.5" y="247" font-size="5" fill="#8a7a6a" text-anchor="middle">P02</text>
<path d="M1253,254.4 H1305.7" stroke="#2f2318" stroke-width="1" fill="none"/><text x="1266.2" y="251.5" font-size="8.2" letter-spacing="1" fill="#4b3a2c" text-anchor="middle">90</text><text x="1263.3" y="264.5" font-size="8.2" letter-spacing="1" fill="#4b3a2c" text-anchor="middle">243</text><polygon points="1308.8,247.4 1314.4,247.4 1318.2,251.4 1318.2,256.6 1314.4,260.6 1308.8,260.6 1305.0,256.6 1305.0,251.4" fill="none" stroke="#2a1a0a" stroke-width="1"/><text x="1311.6" y="256" font-size="5" fill="#8a7a6a" text-anchor="middle">P30</text>
<path d="M1318.5,252.4 H1371.7" stroke="#2f2318" stroke-width="1" fill="none"/><text x="1334.3" y="249.5" font-size="8.2" letter-spacing="1" fill="#4b3a2c" text-anchor="middle">90</text><text x="1331.3" y="262.5" font-size="8.2" letter-spacing="1" fill="#4b3a2c" text-anchor="middle">243</text><polygon points="1376.8,245.4 1382.4,245.4 1386.2,249.4 1386.2,254.6 1382.4,258.6 1376.8,258.6 1373.0,254.6 1373.0,249.4" fill="none" stroke="#2a1a0a" stroke-width="1"/><text x="1379.6" y="254" font-size="5" fill="#8a7a6a" text-anchor="middle">P33</text>
<path d="M1185.8,257 V308" stroke="#2f2318" stroke-width="1" fill="none"/><text transform="translate(1182.5,270.8) rotate(-90)" font-size="10.5" fill="#222" text-anchor="middle">80</text><text transform="translate(1195.7,268) rotate(-90)" font-size="10.5" fill="#222" text-anchor="middle">243</text><polygon points="1182.2,309.4 1187.8,309.4 1191.6,313.4 1191.6,318.6 1187.8,322.6 1182.2,322.6 1178.4,318.6 1178.4,313.4" fill="none" stroke="#2a1a0a" stroke-width="1"/><text x="1185" y="318" font-size="5" fill="#8a7a6a" text-anchor="middle">P03</text>
<path d="M1253.2,485.5 H1304.9" stroke="#2f2318" stroke-width="1" fill="none"/><text x="1266.4" y="482.5" font-size="8.2" letter-spacing="1" fill="#4b3a2c" text-anchor="middle">80</text><text x="1263.4" y="495.5" font-size="8.2" letter-spacing="1" fill="#4b3a2c" text-anchor="middle">243</text><polygon points="1309.0,478.9 1314.6,478.9 1318.4,482.9 1318.4,488.1 1314.6,492.1 1309.0,492.1 1305.2,488.1 1305.2,482.9" fill="none" stroke="#2a1a0a" stroke-width="1"/><text x="1311.8" y="487.5" font-size="5" fill="#8a7a6a" text-anchor="middle">P29</text>
<path d="M1321.5,547 H1372.7" stroke="#2f2318" stroke-width="1" fill="none"/><text x="1334.6" y="544.5" font-size="8.2" letter-spacing="1" fill="#4b3a2c" text-anchor="middle">90</text><text x="1331.7" y="557.5" font-size="8.2" letter-spacing="1" fill="#4b3a2c" text-anchor="middle">243</text><polygon points="1376.8,540.4 1382.4,540.4 1386.2,544.4 1386.2,549.6 1382.4,553.6 1376.8,553.6 1373.0,549.6 1373.0,544.4" fill="none" stroke="#2a1a0a" stroke-width="1"/><text x="1379.6" y="549" font-size="5" fill="#8a7a6a" text-anchor="middle">P32</text>
<path d="M1321.5,664.5 H1372.7" stroke="#2f2318" stroke-width="1" fill="none"/><text x="1334.6" y="662.5" font-size="8.2" letter-spacing="1" fill="#4b3a2c" text-anchor="middle">90</text><text x="1331.7" y="675.0" font-size="8.2" letter-spacing="1" fill="#4b3a2c" text-anchor="middle">243</text><polygon points="1376.8,657.9 1382.4,657.9 1386.2,661.9 1386.2,667.1 1382.4,671.1 1376.8,671.1 1373.0,667.1 1373.0,661.9" fill="none" stroke="#2a1a0a" stroke-width="1"/><text x="1379.6" y="666.5" font-size="5" fill="#8a7a6a" text-anchor="middle">P31</text>
<path d="M1311.4,680 V730" stroke="#2f2318" stroke-width="1" fill="none"/><text transform="translate(1309.2,716) rotate(-90)" font-size="10.5" fill="#222" text-anchor="middle">90</text><text transform="translate(1319.6,718) rotate(-90)" font-size="10.5" fill="#222" text-anchor="middle">243</text><polygon points="1308.6,664.8 1314.2,664.8 1318.0,668.8 1318.0,674.0 1314.2,678.0 1308.6,678.0 1304.8,674.0 1304.8,668.8" fill="none" stroke="#2a1a0a" stroke-width="1"/><text x="1311.4" y="673.4" font-size="5" fill="#8a7a6a" text-anchor="middle">P09</text>
<path d="M1138.6,549 V601" stroke="#2f2318" stroke-width="1" fill="none"/><text transform="translate(1135.7,562.5) rotate(-90)" font-size="10.5" fill="#222" text-anchor="middle">80</text><text transform="translate(1148.7,559.6) rotate(-90)" font-size="10.5" fill="#222" text-anchor="middle">243</text><polygon points="1134.8,601.4 1140.4,601.4 1144.2,605.4 1144.2,610.6 1140.4,614.6 1134.8,614.6 1131.0,610.6 1131.0,605.4" fill="none" stroke="#2a1a0a" stroke-width="1"/><text x="1137.6" y="610" font-size="5" fill="#8a7a6a" text-anchor="middle">P07</text>
<path d="M1056,618.4 H1107" stroke="#2f2318" stroke-width="1" fill="none"/><text x="1063.7" y="615.5" font-size="8.2" letter-spacing="1" fill="#4b3a2c" text-anchor="middle">100</text><text x="1063.7" y="628.3" font-size="8.2" letter-spacing="1" fill="#4b3a2c" text-anchor="middle">243</text><polygon points="1111.2,611.6 1116.8,611.6 1120.6,615.6 1120.6,620.8 1116.8,624.8 1111.2,624.8 1107.4,620.8 1107.4,615.6" fill="none" stroke="#2a1a0a" stroke-width="1"/><text x="1114" y="620.2" font-size="5" fill="#8a7a6a" text-anchor="middle">P26</text>
</g>
<g clip-path="url(#cv)" fill="#6f6f6f">
<text x="451.5" y="285" font-size="15.5">Bedroom</text>
<text x="451.7" y="299" font-size="10.8" letter-spacing="0.55">10.39 m²</text>
<text x="781.5" y="141.5" font-size="15.5">Bedroom</text>
<text x="781.7" y="156" font-size="10.8" letter-spacing="0.55">23.51 m²</text>
<text x="1093.5" y="141.5" font-size="15.5">Bedroom</text>
<text x="1093.7" y="156" font-size="10.8" letter-spacing="0.55">24.49 m²</text>
<text x="727.5" y="322" font-size="15.5">Bathroom</text>
<text x="727.0" y="335.8" font-size="10.8" letter-spacing="0.55">5.30 m²</text>
<text x="893.7" y="351" font-size="10.8" letter-spacing="0.55">3.88 m²</text>
<text x="1006.7" y="351" font-size="10.8" letter-spacing="0.55">4.34 m²</text>
<text x="1151.7" y="322" font-size="15.5">Bathroom</text>
<text x="1150.9" y="336" font-size="10.8" letter-spacing="0.55">5.30 m²</text>
<text x="1431.5" y="285" font-size="15.5">Bedroom</text>
<text x="1431.7" y="299" font-size="10.8" letter-spacing="0.55">10.39 m²</text>
<text x="451.7" y="468.1" font-size="15.5">Bedroom</text>
<text x="451.7" y="482" font-size="10.8" letter-spacing="0.55">12.66 m²</text>
<text x="685.6" y="468" font-size="15.5">Bathroom</text>
<text x="685.7" y="482" font-size="10.8" letter-spacing="0.55">6.41 m²</text>
<text x="795.9" y="489.8" font-size="15.5">Wc</text>
<text x="795.7" y="504.6" font-size="10.8" letter-spacing="0.55">3.18 m²</text>
<text x="1110.5" y="490" font-size="15.5">Wc</text>
<text x="1110.2" y="504.6" font-size="10.8" letter-spacing="0.55">3.18 m²</text>
<text x="1192.5" y="468" font-size="15.5">Bathroom</text>
<text x="1191.7" y="482" font-size="10.8" letter-spacing="0.55">6.41 m²</text>
<text x="1431.7" y="468.3" font-size="15.5">Bedroom</text>
<text x="1431.7" y="482" font-size="10.8" letter-spacing="0.55">12.66 m²</text>
<text x="472.8" y="626" font-size="15.5">Bedroom</text>
<text x="472.7" y="639.5" font-size="10.8" letter-spacing="0.55">10.15 m²</text>
<text x="679.5" y="638.5" font-size="15.5">Corridor</text>
<text x="679.7" y="652.7" font-size="10.8" letter-spacing="0.55">15.69 m²</text>
<text x="1180.5" y="631" font-size="15.5">Corridor</text>
<text x="1180.7" y="645.4" font-size="10.8" letter-spacing="0.55">15.69 m²</text>
<text x="1431.5" y="645.5" font-size="15.5">Bedroom</text>
<text x="1431.7" y="659.3" font-size="10.8" letter-spacing="0.55">10.15 m²</text>
<text x="514.2" y="856.1" font-size="15.5">Living Room</text>
<text x="514.2" y="869.8" font-size="10.8" letter-spacing="0.55">33.24 m²</text>
<text x="849.5" y="830.75" font-size="15.5">Kitchen</text>
<text x="849.7" y="845" font-size="10.8" letter-spacing="0.55">16.42 m²</text>
<text x="1047.5" y="830.75" font-size="15.5">Kitchen</text>
<text x="1047.7" y="845" font-size="10.8" letter-spacing="0.55">16.92 m²</text>
<text x="1347.5" y="856.7" font-size="15.5">Living Room</text>
<text x="1347.2" y="870.2" font-size="10.8" letter-spacing="0.55">32.85 m²</text>
</g>
</svg>
</body></html>
